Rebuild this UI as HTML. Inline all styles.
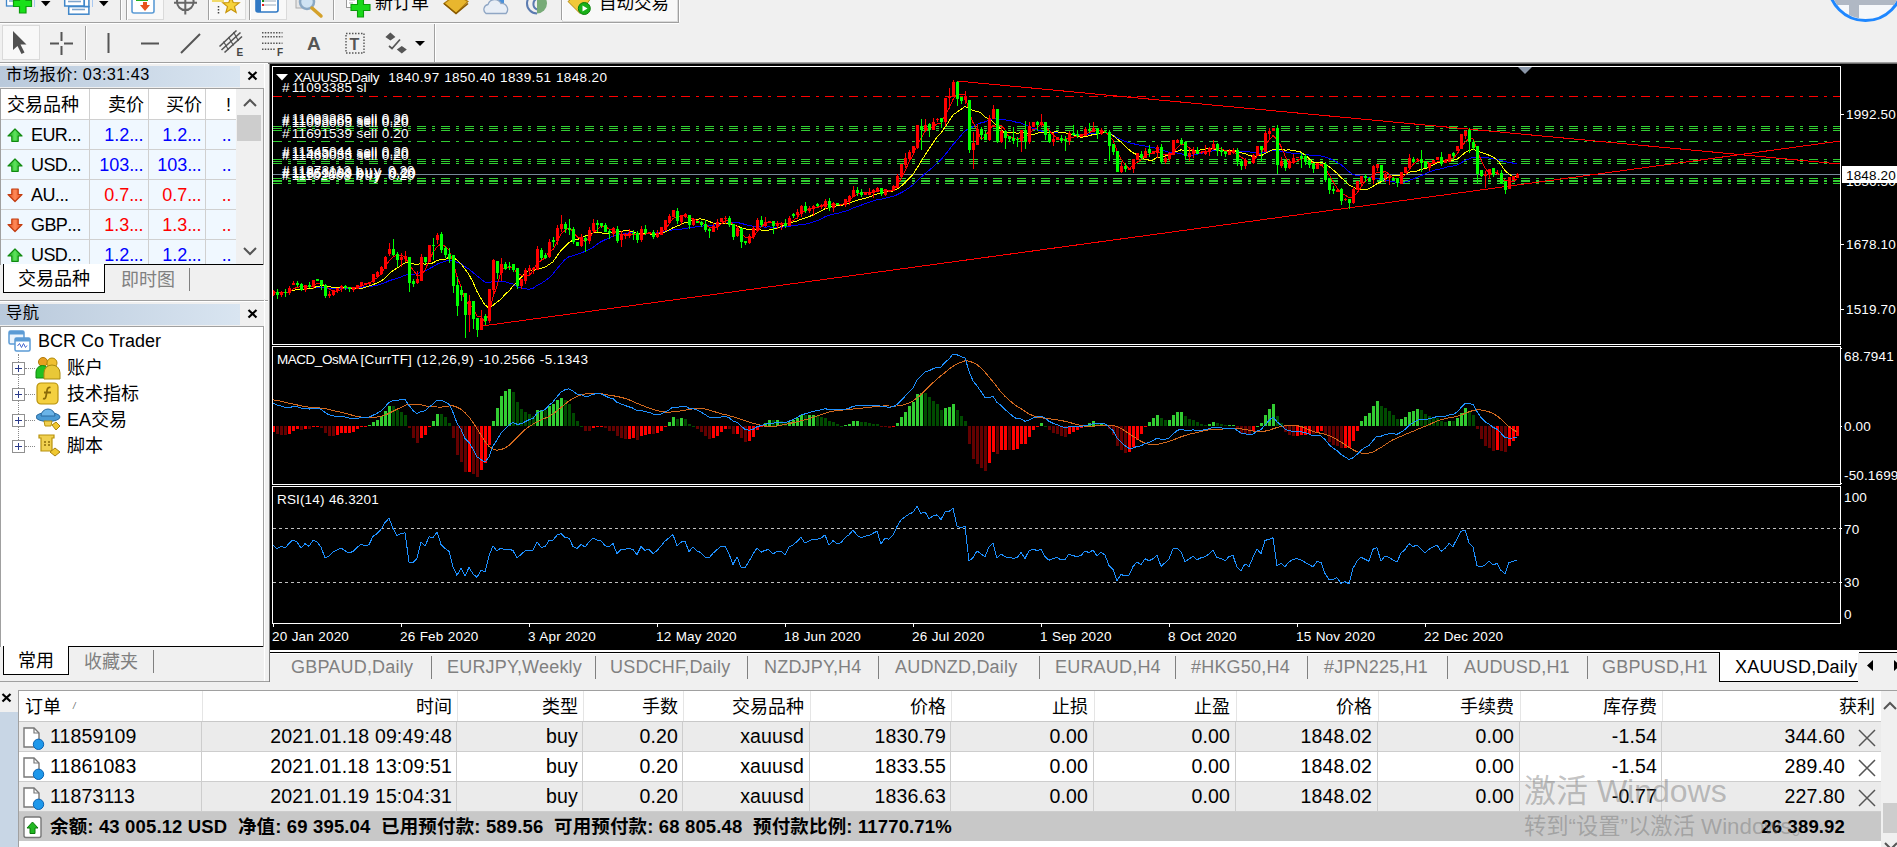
<!DOCTYPE html>
<html lang="zh"><head><meta charset="utf-8"><title>MetaTrader 4</title>
<style>
*{box-sizing:border-box;margin:0;padding:0}
html,body{width:1897px;height:847px;overflow:hidden;background:#f0f0f0;font-family:"Liberation Sans","Noto Sans CJK SC",sans-serif;color:#000}
.a{position:absolute}
.ui{font-size:18px;line-height:30px;white-space:nowrap}
/* toolbars */
#tb1{left:0;top:0;width:678px;height:23px;border-bottom:1px solid #a0a0a0;border-right:1px solid #a0a0a0;overflow:hidden}
#tb1line{left:0;top:22px;width:679px;height:1px;background:#a0a0a0}
#tb1line2{left:0;top:23px;width:679px;height:1px;background:#fff}
#tb2line{left:0;top:62px;width:1897px;height:1px;background:#a0a0a0}
#tb2line2{left:0;top:63px;width:1897px;height:1px;background:#fff}
.vsep{width:1px;background:#a0a0a0;box-shadow:1px 0 0 #fff}
.pressed{background:#f8f8f8;border:1px solid #dadada}
/* left panels */
.phead{left:0;width:240px;height:21px;background:linear-gradient(90deg,#b9c9db,#d9e5f1);font-size:16.3px;letter-spacing:.45px;line-height:17px;padding-left:6px;white-space:nowrap}
.px{font-size:15px;font-weight:bold;line-height:20px}
#mw{left:0;top:88px;width:264px;height:177px;background:#fff;border:1px solid #a0a0a0;border-bottom:0;overflow:hidden}
.mwrow{left:1px;width:235px;height:30px;background:#f0f8ff;border-bottom:1px solid #d0d0d0}
.mwc{top:0;height:30px;font-size:18px;line-height:30px;white-space:nowrap}
.el{letter-spacing:-.4px}
.sy{letter-spacing:-.6px}
.blue{color:#0000ff}.red{color:#ff0000}
.tabline{height:1px;background:#000}
.tabact{background:#fff;border:1px solid #000;border-top:0;font-size:18px;text-align:center;white-space:nowrap}
.tabin{font-size:18px;color:#808080;white-space:nowrap}
#nav{left:0;top:326px;width:264px;height:321px;background:#fff;border:1px solid #a0a0a0;border-bottom:0}
.tree{font-size:18px;line-height:26px;white-space:nowrap}
.exp{width:13px;height:13px;border:1px solid #909090;background:#fff}
.exp:before{content:"";position:absolute;left:2px;top:5px;width:7px;height:1px;background:#2a3a8a}
.exp:after{content:"";position:absolute;left:5px;top:2px;width:1px;height:7px;background:#2a3a8a}
/* chart */
#chartbg{left:270px;top:64px;width:1627px;height:586px;background:#000}
.hs{letter-spacing:2.3px}
.ct{color:#fff;font-size:13.5px;letter-spacing:.15px;word-spacing:.5px;line-height:15px;white-space:nowrap;font-family:"Liberation Sans",sans-serif}
.frame{border:1px solid #fff}
/* chart tabs */
#ctabs{left:270px;top:652px;width:1627px;height:31px}
.ctab{top:653.5px;height:28px;font-size:18px;letter-spacing:.2px;line-height:27px;color:#808080;white-space:nowrap}
.csep{top:656px;width:1px;height:23px;background:#808080}
/* terminal */
#term{left:18px;top:690px;width:1879px;height:157px;background:#fff;border-top:1px solid #a0a0a0;border-left:1px solid #a0a0a0}
.trow{left:19px;width:1862px;height:30px}
.tc{top:0px;height:30px;font-size:19.5px;letter-spacing:.15px;line-height:29px;white-space:nowrap;text-align:right}
.th{top:1px;height:30px;font-size:18px;line-height:30px;white-space:nowrap;text-align:right}
.tsep{top:0;width:1px;height:30px;background:#d8d8d8}

</style></head><body>
<svg width="0" height="0" style="position:absolute"><defs>
<linearGradient id="gu" x1="0" y1="0" x2="1" y2="0"><stop offset="0" stop-color="#18a418"/><stop offset=".5" stop-color="#5ee45e"/><stop offset="1" stop-color="#18a418"/></linearGradient>
<linearGradient id="gd" x1="0" y1="0" x2="1" y2="0"><stop offset="0" stop-color="#e04a14"/><stop offset=".5" stop-color="#ff8a5a"/><stop offset="1" stop-color="#e04a14"/></linearGradient>
</defs></svg>
<!-- ===== toolbar row 1 ===== -->
<div class="a" id="tb1line"></div><div class="a" id="tb1line2"></div>
<div class="a" id="tb2line"></div><div class="a" id="tb2line2"></div>
<div class="a pressed" style="left:127px;top:-8px;width:37px;height:28px"></div>
<div class="a pressed" style="left:209px;top:-8px;width:37px;height:28px"></div>
<div class="a pressed" style="left:250px;top:-8px;width:37px;height:28px"></div>
<div class="a pressed" style="left:562px;top:-8px;width:116px;height:30px"></div>
<div class="a vsep" style="left:120px;top:0;height:20px"></div>
<div class="a vsep" style="left:126px;top:0;height:20px"></div>
<div class="a vsep" style="left:208px;top:0;height:20px"></div>
<div class="a vsep" style="left:249px;top:0;height:20px"></div>
<div class="a vsep" style="left:333px;top:0;height:20px"></div>
<div class="a vsep" style="left:561px;top:0;height:20px"></div>
<div class="a vsep" style="left:678px;top:0;height:22px"></div>
<svg class="a" style="left:0;top:0" width="700" height="22" viewBox="0 0 700 22">
 <!-- new chart -->
 <rect x="6.500" y="-6" width="14" height="12" fill="#fff" stroke="#3f86c9" stroke-width="1.300"/>
 <path d="M9 1h8" stroke="#7fa5cc" stroke-width="1.500"/>
 <path d="M19.500 -7h6.500v7.500h5.500v6h-5.500v6.500h-6.500v-6.500h-6v-6h6z" fill="#19e019" stroke="#0c9c0c" stroke-width="1.200"/>
 <path d="M34.500 0v7M92.500 0v7" stroke="#a8c8f0" stroke-width="1"/>
 <path d="M41 1h9.500l-4.750 5.200z" fill="#000"/>
 <!-- profiles -->
 <rect x="64.700" y="-6" width="19.600" height="12" fill="#fff" stroke="#3f86c9" stroke-width="1.500"/>
 <path d="M68 1.500h13" stroke="#7fa5cc" stroke-width="1.600"/>
 <rect x="68.700" y="6.600" width="20.200" height="7.600" fill="#fff" stroke="#3f86c9" stroke-width="1.500"/>
 <path d="M84.300 0v6.600h4.600v-6.600" fill="#fff" stroke="#3f86c9" stroke-width="1.500"/>
 <path d="M72 9.500h13" stroke="#7fa5cc" stroke-width="1.600"/>
 <path d="M99 1h9.500l-4.750 5.200z" fill="#000"/>
 <!-- market watch -->
 <rect x="132" y="-8" width="22" height="21" rx="2" fill="#fff" stroke="#5b9bd5" stroke-width="1.6"/>
 <path d="M143 2h4v3h3l-5 6-5-6h3z" fill="#e8531a"/>
 <path d="M136 -2h5v-3h3v3h4v3h-12z" fill="#20b020"/>
 <!-- data window crosshair -->
 <circle cx="185.3" cy="1.8" r="8.3" fill="none" stroke="#666" stroke-width="2"/>
 <path d="M185.300 -8v22.500M174 2.800h23" stroke="#666" stroke-width="2"/>
 <!-- navigator star -->
 <path d="M231.0 -3.1L233.2 2.5L239.2 2.8L234.5 6.6L236.1 12.5L231.0 9.2L225.9 12.5L227.5 6.6L222.8 2.8L228.8 2.5z" fill="#f6d23a" stroke="#c8960c" stroke-width="1.2"/>
 <path d="M218.500 6v8" stroke="#444" stroke-width="1.5" stroke-dasharray="1.500 1.500"/>
 <rect x="212" y="-6" width="12" height="8" fill="#f1da6a"/>
 <!-- terminal book -->
 <rect x="256" y="-8" width="22" height="20" rx="2" fill="#fff" stroke="#2f78c4" stroke-width="1.6"/>
 <rect x="256" y="-8" width="5" height="20" fill="#2f78c4"/>
 <path d="M264 1h12M264 5h12" stroke="#9ab" stroke-width="1"/>
 <rect x="262" y="0" width="2" height="2" fill="#1a8a1a"/><rect x="262" y="4" width="2" height="2" fill="#e02020"/>
 <!-- tester magnifier -->
 <rect x="296" y="-6" width="12" height="14" fill="#e6e6e6" stroke="#aaa"/>
 <circle cx="307" cy="2" r="7" fill="#cfe3f3" stroke="#8aa8c4" stroke-width="2.5"/>
 <path d="M312 8l9 8" stroke="#d4a12a" stroke-width="3.5" stroke-linecap="round"/>
 <!-- new order -->
 <rect x="346.500" y="-6" width="13" height="13.500" fill="#fff" stroke="#999"/>
 <path d="M349 0h6M349 3h4" stroke="#aaa" stroke-width="1"/>
 <path d="M357.500 -2h6v6.500h6.500v6h-6.500v6.500h-6v-6.500h-6.500v-6h6.500z" fill="#19d819" stroke="#0c9c0c" stroke-width="1.100"/>
 <g transform="translate(0,1.500)">
 <!-- gold book -->
 <path d="M444 2l12-9 12 7-12 12z" fill="#e8b62e" stroke="#b07d0c" stroke-width="1.200"/>
 <path d="M444 2l12 10 12-10" fill="none" stroke="#8a5a00" stroke-width="1.600"/>
 <!-- cloud -->
 <rect x="492" y="-8" width="12" height="10" fill="#4a90d9"/>
 <path d="M486 12a5 5 0 0 1 2-9a7 7 0 0 1 13-1a6 6 0 0 1 5 10z" fill="#e8eef6" stroke="#8fa6c4" stroke-width="1.300"/>
 <!-- signal -->
 <path d="M537 -8a10 10 0 0 0 0 20" fill="none" stroke="#5b7bb0" stroke-width="2"/>
 <path d="M537 -3a6 6 0 0 0 0 11" fill="none" stroke="#5b7bb0" stroke-width="2"/>
 <path d="M537 -8a10 10 0 0 1 0 20z" fill="#5a9a5a" opacity=".8"/>
 <!-- autotrading -->
 <path d="M568 0l10-8 12 6-10 14z" fill="#f0c83a" stroke="#b58a10" stroke-width="1"/>
 <circle cx="584.300" cy="7" r="6" fill="#18b018" stroke="#0a800a"/>
 <path d="M582.500 4v6l5-3z" fill="#fff"/>
 </g>
</svg>
<div class="a ui" style="left:375px;top:-12px;">新订单</div>
<div class="a ui" style="left:599px;top:-12px;font-size:17.500px">自动交易</div>
<!-- avatar circle top right -->
<div class="a" style="left:1827px;top:-54.800px;width:76.800px;height:76.800px;border-radius:50%;border:3.300px solid #1e87ff;background:#f5f7fa;overflow:hidden">
<div class="a" style="left:0;top:50px;width:80px;height:7px;background:#b0b8c4"></div>
<div class="a" style="left:18.500px;top:50px;width:10px;height:30px;background:#b0b8c4"></div>
</div>
<!-- ===== toolbar row 2 ===== -->
<div class="a pressed" style="left:2px;top:25px;width:38px;height:35px"></div>
<div class="a vsep" style="left:85px;top:26px;height:34px"></div>
<div class="a vsep" style="left:434px;top:24px;height:38px"></div>
<svg class="a" style="left:0;top:24px" width="440" height="38" viewBox="0 24 440 38">
 <path d="M13 31v19l4.500-4 4 8 3-1.500-4-8h6z" fill="#505050"/>
 <path d="M50 43.500h9M64 43.500h9M61.500 32v9M61.500 46v9" stroke="#555" stroke-width="2"/>
 <path d="M108.500 33v20" stroke="#555" stroke-width="2"/>
 <path d="M141 43.500h18" stroke="#555" stroke-width="2"/>
 <path d="M181 53l19-19" stroke="#555" stroke-width="2"/>
 <!-- channel E -->
 <path d="M219.500 46.500l17-16M221.500 50l19-17.500M224.500 52.500l17.500-16" stroke="#555" stroke-width="1.600"/>
 <path d="M223.500 41.500l5 8.500M228.500 37l5 8.500M233.500 32l5 9" stroke="#555" stroke-width="1.200"/>
 <!-- fibo F -->
 <path d="M262 32.700h20.500M262 36.700h20.500M262 43.200h20.500M262 49.300h14" stroke="#555" stroke-width="1.500" stroke-dasharray="1.500 1.300"/>
 <!-- T box -->
 <rect x="346" y="33.500" width="18" height="19.500" fill="none" stroke="#555" stroke-width="1.400" stroke-dasharray="1.500 1.500"/>
 <!-- arrows -->
 <path d="M385.400 37l5-4.500 5 4.500-5 3.500zM396.800 49.500l5-3.500 5 3.500-5 4z" fill="#555"/>
 <path d="M389 46l3 2.500 8-9" stroke="#555" stroke-width="1.700" fill="none"/>
 <path d="M415 41h10l-5 5z" fill="#000"/>
</svg>
<div class="a" style="left:236.500px;top:47.500px;font-size:10px;font-weight:bold;color:#444;line-height:10px">E</div>
<div class="a" style="left:277px;top:47.500px;font-size:10px;font-weight:bold;color:#444;line-height:10px">F</div>
<div class="a" style="left:307px;top:32.500px;font-size:19px;font-weight:bold;color:#555;line-height:22px">A</div>
<div class="a" style="left:349.500px;top:34.500px;font-size:16px;font-weight:bold;color:#555;line-height:20px">T</div>
<!-- ===== Market Watch ===== -->
<div class="a phead" style="top:66px">市场报价: 03:31:43</div>
<svg class="a" style="left:247px;top:71px" width="12" height="10" viewBox="0 0 12 10"><path d="M1.500 1l8 7.500M9.500 1l-8 7.500" stroke="#000" stroke-width="2.200"/></svg>
<div class="a" id="mw">
 <div class="a" style="left:0;top:0;width:235px;height:31px;background:#fff;border-bottom:1px solid #d0d0d0"></div>
 <div class="a mwc" style="top:1px;left:6px;">交易品种</div>
 <div class="a mwc" style="top:1px;left:107px;">卖价</div>
 <div class="a mwc" style="top:1px;left:165px;">买价</div>
 <div class="a mwc" style="top:1px;left:225px;">!</div>
 <div class="a mwrow" style="left:0;top:31px"><svg class="a" style="left:5.300px;top:7px" width="18" height="18" viewBox="0 0 18 18"><path d="M9 2l7 7h-3.800v5.300h-6.400v-5.300h-3.800z" fill="url(#gu)" stroke="#108a10" stroke-width="1.200" stroke-linejoin="round"/></svg><div class="a mwc sy" style="left:30px">EUR<span class="el">...</span></div><div class="a mwc blue" style="left:89px;width:53px;text-align:right">1.2<span class="el">...</span></div><div class="a mwc blue" style="left:148px;width:52px;text-align:right">1.2<span class="el">...</span></div><div class="a mwc blue" style="left:206px;width:24px;text-align:right"><span class="el">..</span></div></div>
<div class="a mwrow" style="left:0;top:61px"><svg class="a" style="left:5.300px;top:7px" width="18" height="18" viewBox="0 0 18 18"><path d="M9 2l7 7h-3.800v5.300h-6.400v-5.300h-3.800z" fill="url(#gu)" stroke="#108a10" stroke-width="1.200" stroke-linejoin="round"/></svg><div class="a mwc sy" style="left:30px">USD<span class="el">...</span></div><div class="a mwc blue" style="left:89px;width:53px;text-align:right">103<span class="el">...</span></div><div class="a mwc blue" style="left:148px;width:52px;text-align:right">103<span class="el">...</span></div><div class="a mwc blue" style="left:206px;width:24px;text-align:right"><span class="el">..</span></div></div>
<div class="a mwrow" style="left:0;top:91px"><svg class="a" style="left:5.300px;top:6px" width="18" height="18" viewBox="0 0 18 18"><path d="M9 15.500l7-7h-3.800v-5.500h-6.400v5.500h-3.800z" fill="url(#gd)" stroke="#c23c10" stroke-width="1.200" stroke-linejoin="round"/></svg><div class="a mwc sy" style="left:30px">AU<span class="el">...</span></div><div class="a mwc red" style="left:89px;width:53px;text-align:right">0.7<span class="el">...</span></div><div class="a mwc red" style="left:148px;width:52px;text-align:right">0.7<span class="el">...</span></div><div class="a mwc red" style="left:206px;width:24px;text-align:right"><span class="el">..</span></div></div>
<div class="a mwrow" style="left:0;top:121px"><svg class="a" style="left:5.300px;top:6px" width="18" height="18" viewBox="0 0 18 18"><path d="M9 15.500l7-7h-3.800v-5.500h-6.400v5.500h-3.800z" fill="url(#gd)" stroke="#c23c10" stroke-width="1.200" stroke-linejoin="round"/></svg><div class="a mwc sy" style="left:30px">GBP<span class="el">...</span></div><div class="a mwc red" style="left:89px;width:53px;text-align:right">1.3<span class="el">...</span></div><div class="a mwc red" style="left:148px;width:52px;text-align:right">1.3<span class="el">...</span></div><div class="a mwc red" style="left:206px;width:24px;text-align:right"><span class="el">..</span></div></div>
<div class="a mwrow" style="left:0;top:151px"><svg class="a" style="left:5.300px;top:7px" width="18" height="18" viewBox="0 0 18 18"><path d="M9 2l7 7h-3.800v5.300h-6.400v-5.300h-3.800z" fill="url(#gu)" stroke="#108a10" stroke-width="1.200" stroke-linejoin="round"/></svg><div class="a mwc sy" style="left:30px">USD<span class="el">...</span></div><div class="a mwc blue" style="left:89px;width:53px;text-align:right">1.2<span class="el">...</span></div><div class="a mwc blue" style="left:148px;width:52px;text-align:right">1.2<span class="el">...</span></div><div class="a mwc blue" style="left:206px;width:24px;text-align:right"><span class="el">..</span></div></div>

 <div class="a" style="left:88px;top:0;width:1px;height:180px;background:#d0d0d0"></div>
 <div class="a" style="left:147px;top:0;width:1px;height:180px;background:#d0d0d0"></div>
 <div class="a" style="left:204px;top:0;width:1px;height:180px;background:#d0d0d0"></div>
 <!-- scrollbar -->
 <div class="a" style="left:235px;top:0;width:28px;height:180px;background:#f0f0f0"></div>
 <div class="a" style="left:236px;top:26px;width:24px;height:26px;background:#cdcdcd"></div>
 <svg class="a" style="left:241px;top:9px" width="16" height="10" viewBox="0 0 16 10"><path d="M2 8l6-6 6 6" fill="none" stroke="#555" stroke-width="2"/></svg>
 <svg class="a" style="left:241px;top:157px" width="16" height="10" viewBox="0 0 16 10"><path d="M2 2l6 6 6-6" fill="none" stroke="#555" stroke-width="2"/></svg>
</div>
<div class="a tabline" style="left:104px;top:264px;width:159px"></div>
<div class="a tabact" style="left:3px;top:264px;width:102px;height:29px;line-height:31px">交易品种</div>
<div class="a tabin" style="left:121px;top:267px;line-height:27px">即时图</div>
<div class="a" style="left:189px;top:268px;width:1px;height:23px;background:#808080"></div>
<div class="a" style="left:0;top:300px;width:268px;height:1px;background:#a0a0a0"></div>
<div class="a" style="left:0;top:301px;width:268px;height:1px;background:#fff"></div>
<div class="a" style="left:264px;top:64px;width:1px;height:235px;background:#fff"></div>
<!-- ===== Navigator ===== -->
<div class="a phead" style="top:304px">导航</div>
<svg class="a" style="left:247px;top:309px" width="12" height="10" viewBox="0 0 12 10"><path d="M1.500 1l8 7.500M9.500 1l-8 7.500" stroke="#000" stroke-width="2.200"/></svg>
<div class="a" id="nav">
 <svg class="a" style="left:7px;top:3px" width="24" height="24" viewBox="0 0 24 24">
  <rect x="1" y="1" width="15" height="13" rx="1.500" fill="#eaf3fc" stroke="#5b9bd5" stroke-width="1.500"/><rect x="1" y="1" width="15" height="3.500" fill="#5b9bd5"/>
  <rect x="7" y="8" width="15" height="13" rx="1.500" fill="#fff" stroke="#5b9bd5" stroke-width="1.500"/><rect x="7" y="8" width="15" height="3.500" fill="#5b9bd5"/>
  <path d="M9.500 16l2-2.500 2 4 2-4 2 4 1.500-2" fill="none" stroke="#4a6ad0" stroke-width="1"/>
 </svg>
 <div class="a tree" style="left:37px;top:1px">BCR Co Trader</div>
 <div class="a" style="left:17px;top:27px;width:0;height:86px;border-left:1px dotted #888"></div>
 <div class="a exp" style="left:11px;top:35px"></div><div class="a" style="left:24px;top:41px;width:10px;height:0;border-top:1px dotted #888"></div><svg class="a" style="left:34px;top:29px" width="26" height="24" viewBox="0 0 26 24"><circle cx="8" cy="6" r="4.500" fill="#e8a020" stroke="#b07808"/><path d="M1 22v-6a6 6 0 0 1 13 0v6z" fill="#22c022" stroke="#0d8a0d"/><circle cx="17" cy="7" r="5" fill="#f0c030" stroke="#b08a08"/><path d="M9 23v-6a8 8 0 0 1 16 0v6z" fill="#e8c838" stroke="#a88a10"/></svg><div class="a tree" style="left:66px;top:28px">账户</div>
<div class="a exp" style="left:11px;top:61px"></div><div class="a" style="left:24px;top:67px;width:10px;height:0;border-top:1px dotted #888"></div><svg class="a" style="left:35px;top:55px" width="24" height="24" viewBox="0 0 24 24"><rect x="1" y="1" width="21" height="21" rx="4" fill="#f4d040" stroke="#b8920c" stroke-width="1.200"/><path d="M14.500 5.500c-3 -1 -3.500 2 -4 6s-1 6 -3.500 5M8 10.500h7" fill="none" stroke="#8a6a08" stroke-width="1.800"/></svg><div class="a tree" style="left:66px;top:54px">技术指标</div>
<div class="a exp" style="left:11px;top:87px"></div><div class="a" style="left:24px;top:93px;width:10px;height:0;border-top:1px dotted #888"></div><svg class="a" style="left:35px;top:81px" width="26" height="24" viewBox="0 0 26 24"><ellipse cx="12" cy="9" rx="12" ry="4.500" fill="#4a9ad4" stroke="#2a6aa0"/><path d="M5 8a7 7 0 0 1 14 0z" fill="#6ab4e8" stroke="#2a6aa0"/><path d="M8 13h8l-1 5h-6z" fill="#f0d050" stroke="#b8920c"/><path d="M16 17l4-3 4 4-4 4z" fill="#f0c830" stroke="#a8820c"/></svg><div class="a tree" style="left:66px;top:80px">EA交易</div>
<div class="a exp" style="left:11px;top:113px"></div><div class="a" style="left:24px;top:119px;width:10px;height:0;border-top:1px dotted #888"></div><svg class="a" style="left:35px;top:107px" width="26" height="24" viewBox="0 0 26 24"><path d="M3 1h15v3h-2v13h-11v-13h-2z" fill="#f0d050" stroke="#b8920c" stroke-width="1.200"/><path d="M8 8h2M12 8h2M8 11h2M12 11h2" stroke="#8a6a08" stroke-width="1.500"/><path d="M14 18l5-4 5 4-5 4z" fill="#f0c830" stroke="#a8820c"/></svg><div class="a tree" style="left:66px;top:106px">脚本</div>

</div>
<div class="a tabline" style="left:68px;top:646px;width:195px"></div>
<div class="a tabact" style="left:3px;top:646px;width:66px;height:29px;line-height:31px">常用</div>
<div class="a tabin" style="left:84px;top:649px;line-height:27px">收藏夹</div>
<div class="a" style="left:153px;top:650px;width:1px;height:23px;background:#808080"></div>
<div class="a" style="left:0;top:681px;width:270px;height:1px;background:#a0a0a0"></div>
<div class="a" style="left:269px;top:64px;width:1px;height:618px;background:#808080"></div>
<div class="a" style="left:264px;top:300px;width:1px;height:381px;background:#fff"></div>
<!-- ===== Chart ===== -->
<div class="a" style="left:268px;top:63px;width:1629px;height:1px;background:#696969"></div>
<div class="a" id="chartbg"></div>
<div class="a" style="left:270px;top:650px;width:1627px;height:2px;background:#fff"></div>
<svg class="a" style="left:270px;top:64px" width="1627" height="587" viewBox="270 64 1627 587" shape-rendering="crispEdges">
<line x1="273" y1="96.5" x2="1840" y2="96.5" stroke="#ff0000" stroke-width="1" stroke-dasharray="9 6 3 6"/>
<line x1="273" y1="126.5" x2="1840" y2="126.5" stroke="#32cd32" stroke-width="1" stroke-dasharray="9 6 3 6"/>
<line x1="273" y1="128.5" x2="1840" y2="128.5" stroke="#32cd32" stroke-width="1" stroke-dasharray="9 6 3 6"/>
<line x1="273" y1="130.5" x2="1840" y2="130.5" stroke="#32cd32" stroke-width="1" stroke-dasharray="9 6 3 6"/>
<line x1="273" y1="141.5" x2="1840" y2="141.5" stroke="#32cd32" stroke-width="1" stroke-dasharray="9 6 3 6"/>
<line x1="273" y1="159.5" x2="1840" y2="159.5" stroke="#32cd32" stroke-width="1" stroke-dasharray="9 6 3 6"/>
<line x1="273" y1="161.5" x2="1840" y2="161.5" stroke="#32cd32" stroke-width="1" stroke-dasharray="9 6 3 6"/>
<line x1="273" y1="163.5" x2="1840" y2="163.5" stroke="#32cd32" stroke-width="1" stroke-dasharray="9 6 3 6"/>
<line x1="273" y1="178.5" x2="1840" y2="178.5" stroke="#32cd32" stroke-width="1" stroke-dasharray="9 6 3 6"/>
<line x1="273" y1="180.5" x2="1840" y2="180.5" stroke="#32cd32" stroke-width="1" stroke-dasharray="9 6 3 6"/>
<line x1="273" y1="181.5" x2="1840" y2="181.5" stroke="#32cd32" stroke-width="1" stroke-dasharray="9 6 3 6"/>
<line x1="273" y1="183.5" x2="1840" y2="183.5" stroke="#32cd32" stroke-width="1" stroke-dasharray="9 6 3 6"/>
<line x1="273" y1="174.5" x2="1840" y2="174.5" stroke="#778899" stroke-width="1" stroke-dasharray=""/>
<g>
<line x1="482" y1="326" x2="1840" y2="141" stroke="#ff0000" stroke-width="1"/>
<line x1="957" y1="81" x2="1840" y2="164" stroke="#ff0000" stroke-width="1"/>
</g>
<polyline points="273.0,291.0 277.0,293.0 281.0,292.6 285.0,292.9 289.0,291.9 293.0,290.4 297.0,289.6 301.0,289.7 305.0,289.1 309.0,288.9 313.0,288.1 317.0,287.6 321.0,287.4 325.0,288.0 329.0,288.4 333.0,288.5 337.0,288.4 341.0,288.3 345.0,288.2 349.0,288.3 353.0,288.2 357.0,287.7 361.0,287.2 365.0,286.7 369.0,286.4 373.0,286.0 377.0,285.3 381.0,284.1 385.0,282.7 389.0,280.8 393.0,279.5 397.0,278.5 401.0,277.1 405.0,275.1 409.0,274.5 413.0,274.2 417.0,273.8 421.0,272.4 425.0,271.1 429.0,268.8 433.0,266.7 437.0,264.2 441.0,262.6 445.0,261.2 449.0,260.0 453.0,260.6 457.0,262.3 461.0,263.7 465.0,266.6 469.0,269.2 473.0,272.4 477.0,275.9 481.0,279.0 485.0,282.2 489.0,282.6 493.0,281.4 497.0,281.1 501.0,281.4 505.0,281.8 509.0,282.9 513.0,284.1 517.0,286.6 521.0,288.1 525.0,288.8 529.0,289.2 533.0,288.3 537.0,285.5 541.0,283.6 545.0,280.8 549.0,277.8 553.0,273.9 557.0,268.8 561.0,264.1 565.0,259.5 569.0,256.6 573.0,255.7 577.0,254.3 581.0,252.9 585.0,251.5 589.0,249.7 593.0,247.4 597.0,244.3 601.0,241.7 605.0,239.8 609.0,238.1 613.0,236.1 617.0,235.7 621.0,234.5 625.0,233.3 629.0,232.9 633.0,232.5 637.0,233.1 641.0,233.4 645.0,233.6 649.0,233.7 653.0,233.4 657.0,232.8 661.0,232.3 665.0,231.3 669.0,230.5 673.0,229.9 677.0,229.7 681.0,229.2 685.0,228.3 689.0,227.9 693.0,227.4 697.0,226.5 701.0,226.1 705.0,225.9 709.0,225.8 713.0,225.4 717.0,224.5 721.0,223.9 725.0,223.2 729.0,222.8 733.0,222.8 737.0,222.5 741.0,223.3 745.0,224.4 749.0,225.4 753.0,226.3 757.0,226.2 761.0,226.7 765.0,227.1 769.0,226.9 773.0,227.2 777.0,227.2 781.0,227.1 785.0,226.9 789.0,226.3 793.0,225.7 797.0,225.2 801.0,224.6 805.0,224.2 809.0,223.4 813.0,221.9 817.0,220.8 821.0,218.9 825.0,216.8 829.0,215.4 833.0,214.2 837.0,213.4 841.0,212.4 845.0,211.2 849.0,209.9 853.0,208.1 857.0,206.7 861.0,205.2 865.0,203.6 869.0,202.3 873.0,201.0 877.0,199.8 881.0,199.3 885.0,198.2 889.0,197.3 893.0,196.3 897.0,194.8 901.0,192.8 905.0,190.6 909.0,187.8 913.0,185.0 917.0,180.9 921.0,177.2 925.0,173.6 929.0,170.3 933.0,166.9 937.0,163.2 941.0,159.6 945.0,154.8 949.0,150.0 953.0,144.6 957.0,140.1 961.0,135.5 965.0,130.8 969.0,128.8 973.0,126.7 977.0,124.3 981.0,122.8 985.0,121.9 989.0,120.3 993.0,118.4 997.0,119.2 1001.0,119.3 1005.0,119.9 1009.0,120.4 1013.0,121.3 1017.0,122.4 1021.0,122.8 1025.0,125.0 1029.0,126.5 1033.0,128.5 1037.0,129.7 1041.0,130.8 1045.0,132.7 1049.0,132.3 1053.0,132.1 1057.0,132.5 1061.0,132.9 1065.0,132.9 1069.0,133.6 1073.0,134.9 1077.0,134.7 1081.0,134.9 1085.0,134.4 1089.0,134.0 1093.0,133.3 1097.0,133.1 1101.0,133.1 1105.0,132.6 1109.0,133.6 1113.0,135.2 1117.0,137.5 1121.0,139.7 1125.0,141.4 1129.0,142.7 1133.0,143.7 1137.0,144.5 1141.0,145.4 1145.0,145.9 1149.0,146.9 1153.0,147.7 1157.0,148.3 1161.0,149.6 1165.0,151.0 1169.0,152.2 1173.0,152.8 1177.0,153.0 1181.0,153.7 1185.0,154.8 1189.0,155.2 1193.0,155.1 1197.0,154.2 1201.0,153.5 1205.0,152.6 1209.0,151.6 1213.0,150.8 1217.0,150.7 1221.0,150.4 1225.0,150.6 1229.0,150.4 1233.0,150.3 1237.0,151.1 1241.0,151.3 1245.0,151.4 1249.0,151.9 1253.0,152.7 1257.0,153.0 1261.0,153.3 1265.0,152.2 1269.0,151.1 1273.0,150.0 1277.0,150.6 1281.0,151.1 1285.0,151.9 1289.0,152.6 1293.0,153.3 1297.0,153.6 1301.0,153.9 1305.0,154.3 1309.0,155.0 1313.0,155.9 1317.0,156.0 1321.0,155.9 1325.0,156.9 1329.0,158.3 1333.0,160.1 1337.0,162.2 1341.0,164.7 1345.0,168.1 1349.0,171.7 1353.0,174.7 1357.0,175.4 1361.0,176.2 1365.0,176.7 1369.0,177.7 1373.0,178.1 1377.0,178.5 1381.0,179.6 1385.0,180.2 1389.0,180.8 1393.0,181.4 1397.0,182.4 1401.0,182.8 1405.0,182.1 1409.0,180.5 1413.0,179.0 1417.0,177.4 1421.0,175.6 1425.0,174.0 1429.0,172.0 1433.0,170.5 1437.0,169.4 1441.0,168.8 1445.0,167.8 1449.0,166.5 1453.0,166.0 1457.0,165.1 1461.0,162.8 1465.0,160.6 1469.0,158.9 1473.0,157.3 1477.0,156.9 1481.0,157.1 1485.0,157.4 1489.0,158.0 1493.0,158.7 1497.0,159.4 1501.0,160.4 1505.0,161.6 1509.0,162.3 1513.0,163.1 1517.0,163.9" fill="none" stroke="#0000ff" stroke-width="1" />
<polyline points="273.0,291.0 277.0,293.0 281.0,292.6 285.0,292.9 289.0,291.9 293.0,290.4 297.0,289.6 301.0,289.7 305.0,289.1 309.0,288.9 313.0,287.9 317.0,286.5 321.0,285.8 325.0,286.0 329.0,286.6 333.0,287.3 337.0,287.6 341.0,287.1 345.0,287.4 349.0,287.7 353.0,288.5 357.0,288.9 361.0,288.6 365.0,287.3 369.0,286.1 373.0,284.6 377.0,283.0 381.0,281.1 385.0,278.0 389.0,273.9 393.0,270.6 397.0,268.1 401.0,265.5 405.0,262.8 409.0,262.9 413.0,263.8 417.0,264.6 421.0,263.6 425.0,264.1 429.0,263.8 433.0,262.9 437.0,260.3 441.0,259.6 445.0,259.5 449.0,257.1 453.0,257.3 457.0,260.0 461.0,263.8 465.0,269.1 469.0,274.7 473.0,282.0 477.0,291.6 481.0,298.4 485.0,305.0 489.0,308.0 493.0,305.4 497.0,302.1 501.0,299.1 505.0,294.4 509.0,291.0 513.0,286.1 517.0,281.7 521.0,277.7 525.0,272.6 529.0,270.5 533.0,271.2 537.0,268.8 541.0,268.2 545.0,267.1 549.0,264.6 553.0,261.8 557.0,256.0 561.0,250.5 565.0,246.5 569.0,242.7 573.0,240.1 577.0,239.8 581.0,237.7 585.0,236.0 589.0,234.9 593.0,233.0 597.0,232.7 601.0,232.9 605.0,233.2 609.0,233.5 613.0,232.1 617.0,231.7 621.0,231.3 625.0,230.7 629.0,230.9 633.0,232.0 637.0,233.5 641.0,233.8 645.0,234.0 649.0,233.8 653.0,234.7 657.0,233.9 661.0,233.3 665.0,231.9 669.0,230.2 673.0,227.8 677.0,225.9 681.0,224.6 685.0,222.7 689.0,221.9 693.0,220.1 697.0,219.1 701.0,218.9 705.0,219.9 709.0,221.4 713.0,223.0 717.0,223.1 721.0,223.3 725.0,223.7 729.0,223.6 733.0,225.4 737.0,225.9 741.0,227.6 745.0,228.9 749.0,229.4 753.0,229.6 757.0,229.4 761.0,230.0 765.0,230.5 769.0,230.1 773.0,229.1 777.0,228.6 781.0,226.6 785.0,225.0 789.0,223.1 793.0,221.9 797.0,221.1 801.0,219.2 805.0,218.0 809.0,216.7 813.0,214.7 817.0,213.0 821.0,211.2 825.0,208.7 829.0,207.7 833.0,206.4 837.0,205.8 841.0,205.6 845.0,204.4 849.0,203.2 853.0,201.6 857.0,200.3 861.0,199.3 865.0,198.5 869.0,196.9 873.0,195.6 877.0,193.9 881.0,192.9 885.0,192.0 889.0,191.4 893.0,191.0 897.0,189.2 901.0,186.2 905.0,182.7 909.0,178.6 913.0,174.3 917.0,168.0 921.0,161.6 925.0,155.1 929.0,149.2 933.0,142.8 937.0,137.1 941.0,132.9 945.0,126.9 949.0,121.3 953.0,114.8 957.0,112.2 961.0,109.3 965.0,106.5 969.0,108.5 973.0,110.5 977.0,111.5 981.0,112.7 985.0,117.0 989.0,119.2 993.0,121.9 997.0,126.2 1001.0,129.2 1005.0,133.4 1009.0,132.3 1013.0,132.1 1017.0,133.2 1021.0,132.8 1025.0,133.0 1029.0,133.7 1033.0,135.0 1037.0,133.3 1041.0,132.4 1045.0,132.1 1049.0,132.3 1053.0,132.1 1057.0,131.8 1061.0,132.9 1065.0,132.8 1069.0,133.5 1073.0,134.9 1077.0,136.0 1081.0,137.3 1085.0,136.8 1089.0,135.7 1093.0,134.6 1097.0,134.3 1101.0,133.2 1105.0,132.4 1109.0,133.7 1113.0,135.4 1117.0,139.0 1121.0,142.0 1125.0,146.0 1129.0,149.7 1133.0,152.8 1137.0,154.8 1141.0,157.6 1145.0,159.3 1149.0,160.1 1153.0,160.0 1157.0,157.5 1161.0,157.1 1165.0,156.1 1169.0,154.6 1173.0,152.7 1177.0,151.3 1181.0,149.8 1185.0,150.4 1189.0,150.3 1193.0,150.2 1197.0,150.8 1201.0,149.8 1205.0,149.1 1209.0,148.5 1213.0,148.9 1217.0,150.1 1221.0,150.9 1225.0,150.8 1229.0,150.5 1233.0,150.5 1237.0,151.3 1241.0,152.8 1245.0,153.7 1249.0,155.3 1253.0,156.4 1257.0,155.9 1261.0,155.8 1265.0,153.6 1269.0,151.6 1273.0,149.5 1277.0,149.8 1281.0,149.4 1285.0,150.1 1289.0,149.9 1293.0,150.2 1297.0,151.3 1301.0,152.1 1305.0,155.0 1309.0,158.4 1313.0,162.4 1317.0,162.2 1321.0,162.4 1325.0,163.7 1329.0,166.6 1333.0,169.9 1337.0,173.2 1341.0,177.4 1345.0,181.1 1349.0,184.9 1353.0,187.0 1357.0,188.7 1361.0,189.9 1365.0,189.8 1369.0,188.8 1373.0,186.3 1377.0,183.7 1381.0,181.8 1385.0,179.3 1389.0,176.7 1393.0,175.8 1397.0,176.0 1401.0,175.6 1405.0,174.4 1409.0,172.1 1413.0,171.7 1417.0,171.2 1421.0,169.3 1425.0,168.6 1429.0,167.2 1433.0,165.2 1437.0,162.7 1441.0,161.9 1445.0,161.2 1449.0,160.8 1453.0,160.3 1457.0,159.1 1461.0,156.2 1465.0,152.5 1469.0,150.6 1473.0,149.3 1477.0,151.0 1481.0,152.3 1485.0,153.6 1489.0,155.2 1493.0,157.0 1497.0,159.7 1501.0,164.7 1505.0,170.6 1509.0,174.0 1513.0,176.8 1517.0,176.7" fill="none" stroke="#ffff00" stroke-width="1" />
<polyline points="273.0,291.0 277.0,293.0 281.0,292.6 285.0,292.9 289.0,292.1 293.0,289.1 297.0,287.4 301.0,286.5 305.0,285.8 309.0,286.8 313.0,285.6 317.0,283.4 321.0,283.4 325.0,285.6 329.0,289.0 333.0,291.2 337.0,291.7 341.0,289.2 345.0,287.8 349.0,287.8 353.0,287.9 357.0,287.7 361.0,286.3 365.0,284.6 369.0,283.1 373.0,280.5 377.0,277.8 381.0,273.8 385.0,267.4 389.0,260.9 393.0,256.8 397.0,255.1 401.0,255.2 405.0,257.0 409.0,263.9 413.0,269.9 417.0,275.4 421.0,275.6 425.0,270.4 429.0,260.8 433.0,252.5 437.0,247.0 441.0,243.8 445.0,246.3 449.0,249.6 453.0,262.4 457.0,276.5 461.0,286.5 465.0,300.5 469.0,304.2 473.0,307.5 477.0,316.2 481.0,317.0 485.0,322.0 489.0,314.5 493.0,297.1 497.0,285.9 501.0,271.6 505.0,266.6 509.0,268.1 513.0,267.3 517.0,272.8 521.0,275.2 525.0,276.0 529.0,275.6 533.0,271.1 537.0,263.6 541.0,260.7 545.0,258.1 549.0,251.6 553.0,249.7 557.0,242.2 561.0,233.8 565.0,230.6 569.0,227.8 573.0,231.3 577.0,236.8 581.0,238.8 585.0,241.4 589.0,238.5 593.0,232.8 597.0,229.8 601.0,226.0 605.0,226.4 609.0,229.1 613.0,229.8 617.0,233.6 621.0,234.1 625.0,234.2 629.0,235.5 633.0,233.8 637.0,235.2 641.0,234.0 645.0,234.1 649.0,233.6 653.0,232.8 657.0,233.8 661.0,232.3 665.0,229.4 669.0,224.1 673.0,218.4 677.0,216.8 681.0,215.6 685.0,215.3 689.0,219.0 693.0,218.5 697.0,220.3 701.0,222.9 705.0,224.2 709.0,227.2 713.0,228.0 717.0,227.2 721.0,224.2 725.0,220.9 729.0,220.6 733.0,224.2 737.0,226.8 741.0,232.8 745.0,237.3 749.0,237.3 753.0,237.2 757.0,231.7 761.0,227.2 765.0,223.6 769.0,222.0 773.0,223.5 777.0,223.1 781.0,223.2 785.0,224.4 789.0,222.4 793.0,220.5 797.0,217.8 801.0,212.7 805.0,210.8 809.0,209.0 813.0,207.5 817.0,207.5 821.0,206.1 825.0,204.3 829.0,204.8 833.0,204.2 837.0,204.3 841.0,205.1 845.0,202.8 849.0,201.0 853.0,197.1 857.0,194.4 861.0,193.3 865.0,192.6 869.0,193.2 873.0,192.4 877.0,190.6 881.0,191.0 885.0,190.4 889.0,190.4 893.0,189.9 897.0,185.2 901.0,178.8 905.0,170.9 909.0,162.2 913.0,155.0 917.0,145.2 921.0,138.2 925.0,131.6 929.0,127.5 933.0,126.8 937.0,124.0 941.0,123.3 945.0,115.2 949.0,108.6 953.0,99.4 957.0,93.5 961.0,94.4 965.0,94.5 969.0,111.5 973.0,122.5 977.0,129.4 981.0,139.1 985.0,136.6 989.0,130.3 993.0,125.4 997.0,127.1 1001.0,124.9 1005.0,129.9 1009.0,137.5 1013.0,137.3 1017.0,139.6 1021.0,137.6 1025.0,138.2 1029.0,134.3 1033.0,129.7 1037.0,128.4 1041.0,123.5 1045.0,125.8 1049.0,130.8 1053.0,134.4 1057.0,138.2 1061.0,139.8 1065.0,139.5 1069.0,137.9 1073.0,137.4 1077.0,136.1 1081.0,134.8 1085.0,133.9 1089.0,132.8 1093.0,130.8 1097.0,130.5 1101.0,130.8 1105.0,131.2 1109.0,135.8 1113.0,140.2 1117.0,150.7 1121.0,158.8 1125.0,164.6 1129.0,168.6 1133.0,165.3 1137.0,162.3 1141.0,159.6 1145.0,155.3 1149.0,153.9 1153.0,153.3 1157.0,150.6 1161.0,153.4 1165.0,154.5 1169.0,155.1 1173.0,153.3 1177.0,147.7 1181.0,144.1 1185.0,144.7 1189.0,147.9 1193.0,150.4 1197.0,153.1 1201.0,152.0 1205.0,151.5 1209.0,151.0 1213.0,148.4 1217.0,148.3 1221.0,148.6 1225.0,150.3 1229.0,152.0 1233.0,151.6 1237.0,154.2 1241.0,157.1 1245.0,159.4 1249.0,162.9 1253.0,161.2 1257.0,156.2 1261.0,153.8 1265.0,146.0 1269.0,140.1 1273.0,135.7 1277.0,139.2 1281.0,146.4 1285.0,155.6 1289.0,163.8 1293.0,162.1 1297.0,160.9 1301.0,158.7 1305.0,158.8 1309.0,160.5 1313.0,163.4 1317.0,164.5 1321.0,165.0 1325.0,168.8 1329.0,174.4 1333.0,181.5 1337.0,187.9 1341.0,193.0 1345.0,195.0 1349.0,198.0 1353.0,197.8 1357.0,192.8 1361.0,187.1 1365.0,180.9 1369.0,179.0 1373.0,175.3 1377.0,172.4 1381.0,173.1 1385.0,171.4 1389.0,174.1 1393.0,178.1 1397.0,178.4 1401.0,177.7 1405.0,175.3 1409.0,169.8 1413.0,164.5 1417.0,161.2 1421.0,160.2 1425.0,162.6 1429.0,163.0 1433.0,163.3 1437.0,161.9 1441.0,160.9 1445.0,160.2 1449.0,158.7 1453.0,158.5 1457.0,154.2 1461.0,147.7 1465.0,142.0 1469.0,138.6 1473.0,138.9 1477.0,149.0 1481.0,160.2 1485.0,167.9 1489.0,173.2 1493.0,173.4 1497.0,172.7 1501.0,175.2 1505.0,180.5 1509.0,181.0 1513.0,181.7 1517.0,179.1" fill="none" stroke="#ff0000" stroke-width="1" />
<rect x="273" y="290" width="1" height="6" fill="#ff0000"/>
<rect x="272" y="291" width="3" height="4" fill="#ff0000"/>
<rect x="277" y="289" width="1" height="10" fill="#00ff00"/>
<rect x="276" y="292" width="3" height="3" fill="#00ff00"/>
<rect x="281" y="291" width="1" height="6" fill="#ff0000"/>
<rect x="280" y="292" width="3" height="3" fill="#ff0000"/>
<rect x="285" y="289" width="1" height="8" fill="#00ff00"/>
<rect x="284" y="292" width="3" height="1" fill="#00ff00"/>
<rect x="289" y="286" width="1" height="9" fill="#ff0000"/>
<rect x="288" y="288" width="3" height="5" fill="#ff0000"/>
<rect x="293" y="281" width="1" height="4" fill="#ff0000"/>
<rect x="292" y="283" width="3" height="2" fill="#ff0000"/>
<rect x="297" y="281" width="1" height="6" fill="#00ff00"/>
<rect x="296" y="283" width="3" height="2" fill="#00ff00"/>
<rect x="301" y="283" width="1" height="8" fill="#00ff00"/>
<rect x="300" y="284" width="3" height="6" fill="#00ff00"/>
<rect x="305" y="285" width="1" height="7" fill="#ff0000"/>
<rect x="304" y="285" width="3" height="5" fill="#ff0000"/>
<rect x="309" y="282" width="1" height="6" fill="#00ff00"/>
<rect x="308" y="285" width="3" height="2" fill="#00ff00"/>
<rect x="313" y="280" width="1" height="9" fill="#ff0000"/>
<rect x="312" y="280" width="3" height="7" fill="#ff0000"/>
<rect x="317" y="279" width="1" height="2" fill="#00ff00"/>
<rect x="316" y="279" width="3" height="2" fill="#00ff00"/>
<rect x="321" y="280" width="1" height="10" fill="#00ff00"/>
<rect x="320" y="280" width="3" height="5" fill="#00ff00"/>
<rect x="325" y="284" width="1" height="14" fill="#00ff00"/>
<rect x="324" y="285" width="3" height="11" fill="#00ff00"/>
<rect x="329" y="291" width="1" height="7" fill="#ff0000"/>
<rect x="328" y="294" width="3" height="2" fill="#ff0000"/>
<rect x="333" y="290" width="1" height="6" fill="#ff0000"/>
<rect x="332" y="290" width="3" height="5" fill="#ff0000"/>
<rect x="337" y="288" width="1" height="5" fill="#ff0000"/>
<rect x="336" y="288" width="3" height="3" fill="#ff0000"/>
<rect x="341" y="285" width="1" height="7" fill="#ff0000"/>
<rect x="340" y="286" width="3" height="2" fill="#ff0000"/>
<rect x="345" y="285" width="1" height="5" fill="#00ff00"/>
<rect x="344" y="286" width="3" height="2" fill="#00ff00"/>
<rect x="349" y="287" width="1" height="5" fill="#00ff00"/>
<rect x="348" y="287" width="3" height="2" fill="#00ff00"/>
<rect x="353" y="288" width="1" height="4" fill="#ff0000"/>
<rect x="352" y="288" width="3" height="2" fill="#ff0000"/>
<rect x="357" y="285" width="1" height="4" fill="#ff0000"/>
<rect x="356" y="285" width="3" height="4" fill="#ff0000"/>
<rect x="361" y="282" width="1" height="4" fill="#ff0000"/>
<rect x="360" y="282" width="3" height="4" fill="#ff0000"/>
<rect x="365" y="283" width="1" height="1" fill="#ff0000"/>
<rect x="364" y="283" width="3" height="1" fill="#ff0000"/>
<rect x="369" y="282" width="1" height="3" fill="#ff0000"/>
<rect x="368" y="282" width="3" height="2" fill="#ff0000"/>
<rect x="373" y="274" width="1" height="9" fill="#ff0000"/>
<rect x="372" y="274" width="3" height="8" fill="#ff0000"/>
<rect x="377" y="271" width="1" height="6" fill="#ff0000"/>
<rect x="376" y="272" width="3" height="5" fill="#ff0000"/>
<rect x="381" y="266" width="1" height="9" fill="#ff0000"/>
<rect x="380" y="267" width="3" height="7" fill="#ff0000"/>
<rect x="385" y="256" width="1" height="13" fill="#ff0000"/>
<rect x="384" y="257" width="3" height="12" fill="#ff0000"/>
<rect x="389" y="243" width="1" height="13" fill="#ff0000"/>
<rect x="388" y="249" width="3" height="5" fill="#ff0000"/>
<rect x="393" y="239" width="1" height="17" fill="#00ff00"/>
<rect x="392" y="249" width="3" height="6" fill="#00ff00"/>
<rect x="397" y="252" width="1" height="15" fill="#00ff00"/>
<rect x="396" y="254" width="3" height="6" fill="#00ff00"/>
<rect x="401" y="253" width="1" height="14" fill="#ff0000"/>
<rect x="400" y="257" width="3" height="3" fill="#ff0000"/>
<rect x="405" y="251" width="1" height="11" fill="#ff0000"/>
<rect x="404" y="256" width="3" height="3" fill="#ff0000"/>
<rect x="409" y="257" width="1" height="35" fill="#00ff00"/>
<rect x="408" y="257" width="3" height="26" fill="#00ff00"/>
<rect x="413" y="279" width="1" height="8" fill="#00ff00"/>
<rect x="412" y="281" width="3" height="3" fill="#00ff00"/>
<rect x="417" y="271" width="1" height="13" fill="#ff0000"/>
<rect x="416" y="279" width="3" height="4" fill="#ff0000"/>
<rect x="421" y="254" width="1" height="27" fill="#ff0000"/>
<rect x="420" y="257" width="3" height="24" fill="#ff0000"/>
<rect x="425" y="257" width="1" height="7" fill="#00ff00"/>
<rect x="424" y="257" width="3" height="5" fill="#00ff00"/>
<rect x="429" y="245" width="1" height="17" fill="#ff0000"/>
<rect x="428" y="245" width="3" height="17" fill="#ff0000"/>
<rect x="433" y="238" width="1" height="22" fill="#00ff00"/>
<rect x="432" y="245" width="3" height="1" fill="#00ff00"/>
<rect x="437" y="233" width="1" height="11" fill="#ff0000"/>
<rect x="436" y="235" width="3" height="5" fill="#ff0000"/>
<rect x="441" y="232" width="1" height="21" fill="#00ff00"/>
<rect x="440" y="234" width="3" height="16" fill="#00ff00"/>
<rect x="445" y="246" width="1" height="12" fill="#00ff00"/>
<rect x="444" y="248" width="3" height="7" fill="#00ff00"/>
<rect x="449" y="248" width="1" height="15" fill="#00ff00"/>
<rect x="448" y="254" width="3" height="5" fill="#00ff00"/>
<rect x="453" y="255" width="1" height="38" fill="#00ff00"/>
<rect x="452" y="255" width="3" height="31" fill="#00ff00"/>
<rect x="457" y="277" width="1" height="39" fill="#00ff00"/>
<rect x="456" y="285" width="3" height="21" fill="#00ff00"/>
<rect x="461" y="286" width="1" height="15" fill="#00ff00"/>
<rect x="460" y="290" width="3" height="5" fill="#00ff00"/>
<rect x="465" y="293" width="1" height="45" fill="#00ff00"/>
<rect x="464" y="293" width="3" height="22" fill="#00ff00"/>
<rect x="469" y="295" width="1" height="37" fill="#ff0000"/>
<rect x="468" y="301" width="3" height="14" fill="#ff0000"/>
<rect x="473" y="301" width="1" height="28" fill="#00ff00"/>
<rect x="472" y="301" width="3" height="18" fill="#00ff00"/>
<rect x="477" y="318" width="1" height="19" fill="#00ff00"/>
<rect x="476" y="318" width="3" height="12" fill="#00ff00"/>
<rect x="481" y="310" width="1" height="20" fill="#ff0000"/>
<rect x="480" y="318" width="3" height="12" fill="#ff0000"/>
<rect x="485" y="314" width="1" height="11" fill="#00ff00"/>
<rect x="484" y="316" width="3" height="5" fill="#00ff00"/>
<rect x="489" y="289" width="1" height="34" fill="#ff0000"/>
<rect x="488" y="289" width="3" height="32" fill="#ff0000"/>
<rect x="493" y="259" width="1" height="35" fill="#ff0000"/>
<rect x="492" y="260" width="3" height="30" fill="#ff0000"/>
<rect x="497" y="261" width="1" height="18" fill="#00ff00"/>
<rect x="496" y="261" width="3" height="12" fill="#00ff00"/>
<rect x="501" y="258" width="1" height="23" fill="#ff0000"/>
<rect x="500" y="264" width="3" height="9" fill="#ff0000"/>
<rect x="505" y="262" width="1" height="8" fill="#00ff00"/>
<rect x="504" y="264" width="3" height="5" fill="#00ff00"/>
<rect x="509" y="262" width="1" height="8" fill="#00ff00"/>
<rect x="508" y="266" width="3" height="1" fill="#00ff00"/>
<rect x="513" y="264" width="1" height="8" fill="#00ff00"/>
<rect x="512" y="264" width="3" height="6" fill="#00ff00"/>
<rect x="517" y="268" width="1" height="21" fill="#00ff00"/>
<rect x="516" y="268" width="3" height="18" fill="#00ff00"/>
<rect x="521" y="279" width="1" height="10" fill="#ff0000"/>
<rect x="520" y="279" width="3" height="7" fill="#ff0000"/>
<rect x="525" y="268" width="1" height="16" fill="#ff0000"/>
<rect x="524" y="270" width="3" height="11" fill="#ff0000"/>
<rect x="529" y="265" width="1" height="10" fill="#ff0000"/>
<rect x="528" y="268" width="3" height="3" fill="#ff0000"/>
<rect x="533" y="267" width="1" height="7" fill="#ff0000"/>
<rect x="532" y="268" width="3" height="2" fill="#ff0000"/>
<rect x="537" y="246" width="1" height="24" fill="#ff0000"/>
<rect x="536" y="249" width="3" height="21" fill="#ff0000"/>
<rect x="541" y="248" width="1" height="12" fill="#00ff00"/>
<rect x="540" y="250" width="3" height="8" fill="#00ff00"/>
<rect x="545" y="253" width="1" height="6" fill="#00ff00"/>
<rect x="544" y="255" width="3" height="3" fill="#00ff00"/>
<rect x="549" y="239" width="1" height="19" fill="#ff0000"/>
<rect x="548" y="242" width="3" height="15" fill="#ff0000"/>
<rect x="553" y="237" width="1" height="10" fill="#00ff00"/>
<rect x="552" y="240" width="3" height="2" fill="#00ff00"/>
<rect x="557" y="225" width="1" height="20" fill="#ff0000"/>
<rect x="556" y="228" width="3" height="13" fill="#ff0000"/>
<rect x="561" y="215" width="1" height="17" fill="#ff0000"/>
<rect x="560" y="224" width="3" height="5" fill="#ff0000"/>
<rect x="565" y="222" width="1" height="11" fill="#00ff00"/>
<rect x="564" y="224" width="3" height="5" fill="#00ff00"/>
<rect x="569" y="219" width="1" height="16" fill="#00ff00"/>
<rect x="568" y="228" width="3" height="2" fill="#00ff00"/>
<rect x="573" y="227" width="1" height="17" fill="#00ff00"/>
<rect x="572" y="229" width="3" height="13" fill="#00ff00"/>
<rect x="577" y="242" width="1" height="4" fill="#00ff00"/>
<rect x="576" y="242" width="3" height="4" fill="#00ff00"/>
<rect x="581" y="234" width="1" height="13" fill="#ff0000"/>
<rect x="580" y="237" width="3" height="9" fill="#ff0000"/>
<rect x="585" y="236" width="1" height="16" fill="#00ff00"/>
<rect x="584" y="238" width="3" height="3" fill="#00ff00"/>
<rect x="589" y="227" width="1" height="17" fill="#ff0000"/>
<rect x="588" y="230" width="3" height="11" fill="#ff0000"/>
<rect x="593" y="219" width="1" height="13" fill="#ff0000"/>
<rect x="592" y="223" width="3" height="8" fill="#ff0000"/>
<rect x="597" y="220" width="1" height="12" fill="#00ff00"/>
<rect x="596" y="223" width="3" height="2" fill="#00ff00"/>
<rect x="601" y="223" width="1" height="5" fill="#00ff00"/>
<rect x="600" y="223" width="3" height="3" fill="#00ff00"/>
<rect x="605" y="223" width="1" height="9" fill="#00ff00"/>
<rect x="604" y="225" width="3" height="7" fill="#00ff00"/>
<rect x="609" y="229" width="1" height="10" fill="#00ff00"/>
<rect x="608" y="231" width="3" height="2" fill="#00ff00"/>
<rect x="613" y="227" width="1" height="10" fill="#ff0000"/>
<rect x="612" y="228" width="3" height="6" fill="#ff0000"/>
<rect x="617" y="226" width="1" height="17" fill="#00ff00"/>
<rect x="616" y="229" width="3" height="12" fill="#00ff00"/>
<rect x="621" y="231" width="1" height="16" fill="#ff0000"/>
<rect x="620" y="234" width="3" height="6" fill="#ff0000"/>
<rect x="625" y="233" width="1" height="6" fill="#ff0000"/>
<rect x="624" y="234" width="3" height="2" fill="#ff0000"/>
<rect x="629" y="229" width="1" height="9" fill="#ff0000"/>
<rect x="628" y="233" width="3" height="3" fill="#ff0000"/>
<rect x="633" y="230" width="1" height="10" fill="#00ff00"/>
<rect x="632" y="233" width="3" height="1" fill="#00ff00"/>
<rect x="637" y="231" width="1" height="12" fill="#00ff00"/>
<rect x="636" y="233" width="3" height="7" fill="#00ff00"/>
<rect x="641" y="226" width="1" height="16" fill="#ff0000"/>
<rect x="640" y="229" width="3" height="11" fill="#ff0000"/>
<rect x="645" y="225" width="1" height="10" fill="#00ff00"/>
<rect x="644" y="229" width="3" height="4" fill="#00ff00"/>
<rect x="649" y="232" width="1" height="2" fill="#ff0000"/>
<rect x="648" y="232" width="3" height="2" fill="#ff0000"/>
<rect x="653" y="230" width="1" height="9" fill="#00ff00"/>
<rect x="652" y="232" width="3" height="5" fill="#00ff00"/>
<rect x="657" y="230" width="1" height="8" fill="#ff0000"/>
<rect x="656" y="233" width="3" height="4" fill="#ff0000"/>
<rect x="661" y="227" width="1" height="8" fill="#ff0000"/>
<rect x="660" y="227" width="3" height="8" fill="#ff0000"/>
<rect x="665" y="220" width="1" height="11" fill="#ff0000"/>
<rect x="664" y="220" width="3" height="10" fill="#ff0000"/>
<rect x="669" y="214" width="1" height="10" fill="#ff0000"/>
<rect x="668" y="216" width="3" height="7" fill="#ff0000"/>
<rect x="673" y="210" width="1" height="7" fill="#ff0000"/>
<rect x="672" y="210" width="3" height="7" fill="#ff0000"/>
<rect x="677" y="208" width="1" height="16" fill="#00ff00"/>
<rect x="676" y="211" width="3" height="10" fill="#00ff00"/>
<rect x="681" y="216" width="1" height="9" fill="#ff0000"/>
<rect x="680" y="216" width="3" height="6" fill="#ff0000"/>
<rect x="685" y="213" width="1" height="5" fill="#ff0000"/>
<rect x="684" y="214" width="3" height="3" fill="#ff0000"/>
<rect x="689" y="215" width="1" height="14" fill="#00ff00"/>
<rect x="688" y="215" width="3" height="10" fill="#00ff00"/>
<rect x="693" y="219" width="1" height="7" fill="#ff0000"/>
<rect x="692" y="219" width="3" height="6" fill="#ff0000"/>
<rect x="697" y="221" width="1" height="2" fill="#00ff00"/>
<rect x="696" y="221" width="3" height="2" fill="#00ff00"/>
<rect x="701" y="221" width="1" height="6" fill="#00ff00"/>
<rect x="700" y="222" width="3" height="3" fill="#00ff00"/>
<rect x="705" y="220" width="1" height="12" fill="#00ff00"/>
<rect x="704" y="224" width="3" height="6" fill="#00ff00"/>
<rect x="709" y="228" width="1" height="10" fill="#00ff00"/>
<rect x="708" y="229" width="3" height="2" fill="#00ff00"/>
<rect x="713" y="223" width="1" height="9" fill="#ff0000"/>
<rect x="712" y="226" width="3" height="6" fill="#ff0000"/>
<rect x="717" y="219" width="1" height="11" fill="#ff0000"/>
<rect x="716" y="222" width="3" height="5" fill="#ff0000"/>
<rect x="721" y="218" width="1" height="4" fill="#ff0000"/>
<rect x="720" y="218" width="3" height="4" fill="#ff0000"/>
<rect x="725" y="216" width="1" height="8" fill="#ff0000"/>
<rect x="724" y="218" width="3" height="1" fill="#ff0000"/>
<rect x="729" y="216" width="1" height="11" fill="#00ff00"/>
<rect x="728" y="218" width="3" height="7" fill="#00ff00"/>
<rect x="733" y="224" width="1" height="16" fill="#00ff00"/>
<rect x="732" y="224" width="3" height="13" fill="#00ff00"/>
<rect x="737" y="226" width="1" height="11" fill="#ff0000"/>
<rect x="736" y="228" width="3" height="8" fill="#ff0000"/>
<rect x="741" y="228" width="1" height="20" fill="#00ff00"/>
<rect x="740" y="228" width="3" height="14" fill="#00ff00"/>
<rect x="745" y="241" width="1" height="4" fill="#00ff00"/>
<rect x="744" y="241" width="3" height="2" fill="#00ff00"/>
<rect x="749" y="234" width="1" height="10" fill="#ff0000"/>
<rect x="748" y="236" width="3" height="7" fill="#ff0000"/>
<rect x="753" y="226" width="1" height="13" fill="#ff0000"/>
<rect x="752" y="228" width="3" height="9" fill="#ff0000"/>
<rect x="757" y="218" width="1" height="14" fill="#ff0000"/>
<rect x="756" y="220" width="3" height="11" fill="#ff0000"/>
<rect x="761" y="216" width="1" height="11" fill="#00ff00"/>
<rect x="760" y="220" width="3" height="5" fill="#00ff00"/>
<rect x="765" y="217" width="1" height="10" fill="#ff0000"/>
<rect x="764" y="222" width="3" height="4" fill="#ff0000"/>
<rect x="769" y="221" width="1" height="2" fill="#ff0000"/>
<rect x="768" y="221" width="3" height="2" fill="#ff0000"/>
<rect x="773" y="221" width="1" height="13" fill="#00ff00"/>
<rect x="772" y="221" width="3" height="5" fill="#00ff00"/>
<rect x="777" y="221" width="1" height="8" fill="#ff0000"/>
<rect x="776" y="223" width="3" height="3" fill="#ff0000"/>
<rect x="781" y="222" width="1" height="8" fill="#ff0000"/>
<rect x="780" y="223" width="3" height="2" fill="#ff0000"/>
<rect x="785" y="219" width="1" height="9" fill="#00ff00"/>
<rect x="784" y="223" width="3" height="3" fill="#00ff00"/>
<rect x="789" y="216" width="1" height="10" fill="#ff0000"/>
<rect x="788" y="218" width="3" height="8" fill="#ff0000"/>
<rect x="793" y="213" width="1" height="5" fill="#00ff00"/>
<rect x="792" y="214" width="3" height="2" fill="#00ff00"/>
<rect x="797" y="209" width="1" height="10" fill="#ff0000"/>
<rect x="796" y="212" width="3" height="3" fill="#ff0000"/>
<rect x="801" y="205" width="1" height="12" fill="#ff0000"/>
<rect x="800" y="206" width="3" height="8" fill="#ff0000"/>
<rect x="805" y="202" width="1" height="11" fill="#00ff00"/>
<rect x="804" y="206" width="3" height="5" fill="#00ff00"/>
<rect x="809" y="206" width="1" height="7" fill="#ff0000"/>
<rect x="808" y="208" width="3" height="3" fill="#ff0000"/>
<rect x="813" y="205" width="1" height="11" fill="#ff0000"/>
<rect x="812" y="206" width="3" height="3" fill="#ff0000"/>
<rect x="817" y="203" width="1" height="4" fill="#00ff00"/>
<rect x="816" y="204" width="3" height="2" fill="#00ff00"/>
<rect x="821" y="204" width="1" height="5" fill="#ff0000"/>
<rect x="820" y="205" width="3" height="2" fill="#ff0000"/>
<rect x="825" y="199" width="1" height="10" fill="#ff0000"/>
<rect x="824" y="201" width="3" height="6" fill="#ff0000"/>
<rect x="829" y="198" width="1" height="13" fill="#00ff00"/>
<rect x="828" y="201" width="3" height="7" fill="#00ff00"/>
<rect x="833" y="202" width="1" height="10" fill="#ff0000"/>
<rect x="832" y="203" width="3" height="5" fill="#ff0000"/>
<rect x="837" y="203" width="1" height="2" fill="#00ff00"/>
<rect x="836" y="203" width="3" height="2" fill="#00ff00"/>
<rect x="841" y="204" width="1" height="1" fill="#ff0000"/>
<rect x="840" y="204" width="3" height="1" fill="#ff0000"/>
<rect x="845" y="199" width="1" height="8" fill="#ff0000"/>
<rect x="844" y="199" width="3" height="6" fill="#ff0000"/>
<rect x="849" y="195" width="1" height="10" fill="#ff0000"/>
<rect x="848" y="196" width="3" height="5" fill="#ff0000"/>
<rect x="853" y="186" width="1" height="11" fill="#ff0000"/>
<rect x="852" y="190" width="3" height="7" fill="#ff0000"/>
<rect x="857" y="187" width="1" height="9" fill="#00ff00"/>
<rect x="856" y="190" width="3" height="3" fill="#00ff00"/>
<rect x="861" y="189" width="1" height="8" fill="#00ff00"/>
<rect x="860" y="192" width="3" height="3" fill="#00ff00"/>
<rect x="865" y="193" width="1" height="2" fill="#ff0000"/>
<rect x="864" y="193" width="3" height="2" fill="#ff0000"/>
<rect x="869" y="188" width="1" height="7" fill="#ff0000"/>
<rect x="868" y="192" width="3" height="3" fill="#ff0000"/>
<rect x="873" y="189" width="1" height="9" fill="#ff0000"/>
<rect x="872" y="190" width="3" height="3" fill="#ff0000"/>
<rect x="877" y="187" width="1" height="5" fill="#ff0000"/>
<rect x="876" y="188" width="3" height="4" fill="#ff0000"/>
<rect x="881" y="188" width="1" height="8" fill="#00ff00"/>
<rect x="880" y="188" width="3" height="6" fill="#00ff00"/>
<rect x="885" y="189" width="1" height="7" fill="#ff0000"/>
<rect x="884" y="189" width="3" height="6" fill="#ff0000"/>
<rect x="889" y="190" width="1" height="2" fill="#ff0000"/>
<rect x="888" y="190" width="3" height="2" fill="#ff0000"/>
<rect x="893" y="185" width="1" height="6" fill="#ff0000"/>
<rect x="892" y="186" width="3" height="5" fill="#ff0000"/>
<rect x="897" y="174" width="1" height="14" fill="#ff0000"/>
<rect x="896" y="176" width="3" height="12" fill="#ff0000"/>
<rect x="901" y="164" width="1" height="13" fill="#ff0000"/>
<rect x="900" y="164" width="3" height="13" fill="#ff0000"/>
<rect x="905" y="153" width="1" height="15" fill="#ff0000"/>
<rect x="904" y="158" width="3" height="7" fill="#ff0000"/>
<rect x="909" y="150" width="1" height="11" fill="#ff0000"/>
<rect x="908" y="152" width="3" height="7" fill="#ff0000"/>
<rect x="913" y="146" width="1" height="8" fill="#ff0000"/>
<rect x="912" y="146" width="3" height="7" fill="#ff0000"/>
<rect x="917" y="125" width="1" height="24" fill="#ff0000"/>
<rect x="916" y="125" width="3" height="23" fill="#ff0000"/>
<rect x="921" y="119" width="1" height="31" fill="#00ff00"/>
<rect x="920" y="126" width="3" height="4" fill="#00ff00"/>
<rect x="925" y="119" width="1" height="12" fill="#ff0000"/>
<rect x="924" y="125" width="3" height="5" fill="#ff0000"/>
<rect x="929" y="123" width="1" height="14" fill="#00ff00"/>
<rect x="928" y="124" width="3" height="6" fill="#00ff00"/>
<rect x="933" y="118" width="1" height="12" fill="#ff0000"/>
<rect x="932" y="122" width="3" height="8" fill="#ff0000"/>
<rect x="937" y="118" width="1" height="4" fill="#ff0000"/>
<rect x="936" y="119" width="3" height="1" fill="#ff0000"/>
<rect x="941" y="118" width="1" height="10" fill="#00ff00"/>
<rect x="940" y="118" width="3" height="4" fill="#00ff00"/>
<rect x="945" y="98" width="1" height="28" fill="#ff0000"/>
<rect x="944" y="98" width="3" height="24" fill="#ff0000"/>
<rect x="949" y="88" width="1" height="19" fill="#ff0000"/>
<rect x="948" y="96" width="3" height="2" fill="#ff0000"/>
<rect x="953" y="80" width="1" height="17" fill="#ff0000"/>
<rect x="952" y="82" width="3" height="15" fill="#ff0000"/>
<rect x="957" y="81" width="1" height="25" fill="#00ff00"/>
<rect x="956" y="82" width="3" height="17" fill="#00ff00"/>
<rect x="961" y="97" width="1" height="7" fill="#00ff00"/>
<rect x="960" y="97" width="3" height="4" fill="#00ff00"/>
<rect x="965" y="91" width="1" height="13" fill="#ff0000"/>
<rect x="964" y="96" width="3" height="4" fill="#ff0000"/>
<rect x="969" y="100" width="1" height="53" fill="#00ff00"/>
<rect x="968" y="100" width="3" height="50" fill="#00ff00"/>
<rect x="973" y="132" width="1" height="37" fill="#ff0000"/>
<rect x="972" y="143" width="3" height="7" fill="#ff0000"/>
<rect x="977" y="124" width="1" height="20" fill="#ff0000"/>
<rect x="976" y="129" width="3" height="16" fill="#ff0000"/>
<rect x="981" y="127" width="1" height="13" fill="#00ff00"/>
<rect x="980" y="129" width="3" height="6" fill="#00ff00"/>
<rect x="985" y="131" width="1" height="9" fill="#00ff00"/>
<rect x="984" y="134" width="3" height="6" fill="#00ff00"/>
<rect x="989" y="115" width="1" height="26" fill="#ff0000"/>
<rect x="988" y="118" width="3" height="22" fill="#ff0000"/>
<rect x="993" y="105" width="1" height="14" fill="#ff0000"/>
<rect x="992" y="109" width="3" height="10" fill="#ff0000"/>
<rect x="997" y="109" width="1" height="34" fill="#00ff00"/>
<rect x="996" y="109" width="3" height="32" fill="#00ff00"/>
<rect x="1001" y="127" width="1" height="16" fill="#ff0000"/>
<rect x="1000" y="131" width="3" height="11" fill="#ff0000"/>
<rect x="1005" y="130" width="1" height="19" fill="#00ff00"/>
<rect x="1004" y="131" width="3" height="7" fill="#00ff00"/>
<rect x="1009" y="136" width="1" height="6" fill="#00ff00"/>
<rect x="1008" y="136" width="3" height="3" fill="#00ff00"/>
<rect x="1013" y="127" width="1" height="17" fill="#00ff00"/>
<rect x="1012" y="138" width="3" height="3" fill="#00ff00"/>
<rect x="1017" y="137" width="1" height="10" fill="#00ff00"/>
<rect x="1016" y="139" width="3" height="1" fill="#00ff00"/>
<rect x="1021" y="130" width="1" height="22" fill="#ff0000"/>
<rect x="1020" y="130" width="3" height="11" fill="#ff0000"/>
<rect x="1025" y="121" width="1" height="28" fill="#00ff00"/>
<rect x="1024" y="130" width="3" height="12" fill="#00ff00"/>
<rect x="1029" y="122" width="1" height="22" fill="#ff0000"/>
<rect x="1028" y="126" width="3" height="16" fill="#ff0000"/>
<rect x="1033" y="122" width="1" height="5" fill="#ff0000"/>
<rect x="1032" y="122" width="3" height="5" fill="#ff0000"/>
<rect x="1037" y="121" width="1" height="10" fill="#00ff00"/>
<rect x="1036" y="122" width="3" height="3" fill="#00ff00"/>
<rect x="1041" y="114" width="1" height="13" fill="#ff0000"/>
<rect x="1040" y="122" width="3" height="3" fill="#ff0000"/>
<rect x="1045" y="122" width="1" height="18" fill="#00ff00"/>
<rect x="1044" y="122" width="3" height="13" fill="#00ff00"/>
<rect x="1049" y="130" width="1" height="13" fill="#00ff00"/>
<rect x="1048" y="134" width="3" height="8" fill="#00ff00"/>
<rect x="1053" y="133" width="1" height="13" fill="#ff0000"/>
<rect x="1052" y="139" width="3" height="3" fill="#ff0000"/>
<rect x="1057" y="137" width="1" height="3" fill="#ff0000"/>
<rect x="1056" y="137" width="3" height="3" fill="#ff0000"/>
<rect x="1061" y="135" width="1" height="8" fill="#00ff00"/>
<rect x="1060" y="138" width="3" height="3" fill="#00ff00"/>
<rect x="1065" y="136" width="1" height="15" fill="#00ff00"/>
<rect x="1064" y="139" width="3" height="2" fill="#00ff00"/>
<rect x="1069" y="131" width="1" height="14" fill="#ff0000"/>
<rect x="1068" y="133" width="3" height="8" fill="#ff0000"/>
<rect x="1073" y="125" width="1" height="11" fill="#00ff00"/>
<rect x="1072" y="133" width="3" height="2" fill="#00ff00"/>
<rect x="1077" y="130" width="1" height="8" fill="#00ff00"/>
<rect x="1076" y="134" width="3" height="2" fill="#00ff00"/>
<rect x="1081" y="135" width="1" height="2" fill="#ff0000"/>
<rect x="1080" y="135" width="3" height="2" fill="#ff0000"/>
<rect x="1085" y="127" width="1" height="9" fill="#ff0000"/>
<rect x="1084" y="129" width="3" height="7" fill="#ff0000"/>
<rect x="1089" y="123" width="1" height="10" fill="#00ff00"/>
<rect x="1088" y="129" width="3" height="2" fill="#00ff00"/>
<rect x="1093" y="122" width="1" height="10" fill="#ff0000"/>
<rect x="1092" y="128" width="3" height="4" fill="#ff0000"/>
<rect x="1097" y="128" width="1" height="11" fill="#00ff00"/>
<rect x="1096" y="128" width="3" height="6" fill="#00ff00"/>
<rect x="1101" y="128" width="1" height="7" fill="#ff0000"/>
<rect x="1100" y="130" width="3" height="4" fill="#ff0000"/>
<rect x="1105" y="130" width="1" height="3" fill="#00ff00"/>
<rect x="1104" y="132" width="3" height="1" fill="#00ff00"/>
<rect x="1109" y="130" width="1" height="31" fill="#00ff00"/>
<rect x="1108" y="132" width="3" height="14" fill="#00ff00"/>
<rect x="1113" y="144" width="1" height="11" fill="#00ff00"/>
<rect x="1112" y="144" width="3" height="8" fill="#00ff00"/>
<rect x="1117" y="151" width="1" height="21" fill="#00ff00"/>
<rect x="1116" y="151" width="3" height="21" fill="#00ff00"/>
<rect x="1121" y="162" width="1" height="11" fill="#ff0000"/>
<rect x="1120" y="166" width="3" height="6" fill="#ff0000"/>
<rect x="1125" y="163" width="1" height="9" fill="#00ff00"/>
<rect x="1124" y="166" width="3" height="3" fill="#00ff00"/>
<rect x="1129" y="168" width="1" height="2" fill="#ff0000"/>
<rect x="1128" y="168" width="3" height="2" fill="#ff0000"/>
<rect x="1133" y="159" width="1" height="14" fill="#ff0000"/>
<rect x="1132" y="159" width="3" height="10" fill="#ff0000"/>
<rect x="1137" y="153" width="1" height="7" fill="#ff0000"/>
<rect x="1136" y="153" width="3" height="7" fill="#ff0000"/>
<rect x="1141" y="151" width="1" height="9" fill="#00ff00"/>
<rect x="1140" y="154" width="3" height="4" fill="#00ff00"/>
<rect x="1145" y="148" width="1" height="10" fill="#ff0000"/>
<rect x="1144" y="151" width="3" height="7" fill="#ff0000"/>
<rect x="1149" y="145" width="1" height="12" fill="#00ff00"/>
<rect x="1148" y="149" width="3" height="4" fill="#00ff00"/>
<rect x="1153" y="151" width="1" height="3" fill="#ff0000"/>
<rect x="1152" y="151" width="3" height="3" fill="#ff0000"/>
<rect x="1157" y="145" width="1" height="13" fill="#ff0000"/>
<rect x="1156" y="147" width="3" height="6" fill="#ff0000"/>
<rect x="1161" y="144" width="1" height="20" fill="#00ff00"/>
<rect x="1160" y="147" width="3" height="15" fill="#00ff00"/>
<rect x="1165" y="156" width="1" height="8" fill="#ff0000"/>
<rect x="1164" y="158" width="3" height="4" fill="#ff0000"/>
<rect x="1169" y="152" width="1" height="9" fill="#ff0000"/>
<rect x="1168" y="153" width="3" height="6" fill="#ff0000"/>
<rect x="1173" y="140" width="1" height="15" fill="#ff0000"/>
<rect x="1172" y="140" width="3" height="15" fill="#ff0000"/>
<rect x="1177" y="139" width="1" height="4" fill="#ff0000"/>
<rect x="1176" y="140" width="3" height="3" fill="#ff0000"/>
<rect x="1181" y="138" width="1" height="7" fill="#00ff00"/>
<rect x="1180" y="140" width="3" height="4" fill="#00ff00"/>
<rect x="1185" y="142" width="1" height="18" fill="#00ff00"/>
<rect x="1184" y="142" width="3" height="14" fill="#00ff00"/>
<rect x="1189" y="147" width="1" height="14" fill="#ff0000"/>
<rect x="1188" y="153" width="3" height="4" fill="#ff0000"/>
<rect x="1193" y="147" width="1" height="11" fill="#ff0000"/>
<rect x="1192" y="150" width="3" height="4" fill="#ff0000"/>
<rect x="1197" y="147" width="1" height="7" fill="#00ff00"/>
<rect x="1196" y="150" width="3" height="4" fill="#00ff00"/>
<rect x="1201" y="151" width="1" height="3" fill="#ff0000"/>
<rect x="1200" y="152" width="3" height="1" fill="#ff0000"/>
<rect x="1205" y="145" width="1" height="10" fill="#ff0000"/>
<rect x="1204" y="151" width="3" height="3" fill="#ff0000"/>
<rect x="1209" y="147" width="1" height="9" fill="#ff0000"/>
<rect x="1208" y="148" width="3" height="4" fill="#ff0000"/>
<rect x="1213" y="140" width="1" height="10" fill="#ff0000"/>
<rect x="1212" y="144" width="3" height="5" fill="#ff0000"/>
<rect x="1217" y="143" width="1" height="13" fill="#00ff00"/>
<rect x="1216" y="144" width="3" height="7" fill="#00ff00"/>
<rect x="1221" y="147" width="1" height="9" fill="#00ff00"/>
<rect x="1220" y="150" width="3" height="2" fill="#00ff00"/>
<rect x="1225" y="151" width="1" height="6" fill="#00ff00"/>
<rect x="1224" y="151" width="3" height="3" fill="#00ff00"/>
<rect x="1229" y="149" width="1" height="6" fill="#ff0000"/>
<rect x="1228" y="151" width="3" height="4" fill="#ff0000"/>
<rect x="1233" y="148" width="1" height="6" fill="#ff0000"/>
<rect x="1232" y="150" width="3" height="3" fill="#ff0000"/>
<rect x="1237" y="148" width="1" height="18" fill="#00ff00"/>
<rect x="1236" y="150" width="3" height="12" fill="#00ff00"/>
<rect x="1241" y="159" width="1" height="11" fill="#00ff00"/>
<rect x="1240" y="161" width="3" height="5" fill="#00ff00"/>
<rect x="1245" y="158" width="1" height="11" fill="#ff0000"/>
<rect x="1244" y="160" width="3" height="6" fill="#ff0000"/>
<rect x="1249" y="161" width="1" height="2" fill="#00ff00"/>
<rect x="1248" y="161" width="3" height="2" fill="#00ff00"/>
<rect x="1253" y="154" width="1" height="10" fill="#ff0000"/>
<rect x="1252" y="155" width="3" height="8" fill="#ff0000"/>
<rect x="1257" y="146" width="1" height="10" fill="#ff0000"/>
<rect x="1256" y="146" width="3" height="10" fill="#ff0000"/>
<rect x="1261" y="146" width="1" height="15" fill="#00ff00"/>
<rect x="1260" y="146" width="3" height="4" fill="#00ff00"/>
<rect x="1265" y="131" width="1" height="21" fill="#ff0000"/>
<rect x="1264" y="133" width="3" height="19" fill="#ff0000"/>
<rect x="1269" y="128" width="1" height="11" fill="#ff0000"/>
<rect x="1268" y="131" width="3" height="3" fill="#ff0000"/>
<rect x="1273" y="128" width="1" height="3" fill="#ff0000"/>
<rect x="1272" y="128" width="3" height="3" fill="#ff0000"/>
<rect x="1277" y="125" width="1" height="49" fill="#00ff00"/>
<rect x="1276" y="128" width="3" height="37" fill="#00ff00"/>
<rect x="1281" y="157" width="1" height="11" fill="#ff0000"/>
<rect x="1280" y="161" width="3" height="5" fill="#ff0000"/>
<rect x="1285" y="160" width="1" height="11" fill="#00ff00"/>
<rect x="1284" y="160" width="3" height="8" fill="#00ff00"/>
<rect x="1289" y="159" width="1" height="10" fill="#ff0000"/>
<rect x="1288" y="161" width="3" height="7" fill="#ff0000"/>
<rect x="1293" y="154" width="1" height="10" fill="#ff0000"/>
<rect x="1292" y="158" width="3" height="5" fill="#ff0000"/>
<rect x="1297" y="157" width="1" height="1" fill="#ff0000"/>
<rect x="1296" y="157" width="3" height="1" fill="#ff0000"/>
<rect x="1301" y="153" width="1" height="15" fill="#00ff00"/>
<rect x="1300" y="156" width="3" height="3" fill="#00ff00"/>
<rect x="1305" y="154" width="1" height="11" fill="#00ff00"/>
<rect x="1304" y="156" width="3" height="6" fill="#00ff00"/>
<rect x="1309" y="160" width="1" height="8" fill="#00ff00"/>
<rect x="1308" y="160" width="3" height="5" fill="#00ff00"/>
<rect x="1313" y="163" width="1" height="10" fill="#00ff00"/>
<rect x="1312" y="163" width="3" height="6" fill="#00ff00"/>
<rect x="1317" y="163" width="1" height="6" fill="#ff0000"/>
<rect x="1316" y="163" width="3" height="6" fill="#ff0000"/>
<rect x="1321" y="164" width="1" height="2" fill="#ff0000"/>
<rect x="1320" y="164" width="3" height="2" fill="#ff0000"/>
<rect x="1325" y="162" width="1" height="20" fill="#00ff00"/>
<rect x="1324" y="164" width="3" height="16" fill="#00ff00"/>
<rect x="1329" y="178" width="1" height="16" fill="#00ff00"/>
<rect x="1328" y="178" width="3" height="12" fill="#00ff00"/>
<rect x="1333" y="186" width="1" height="8" fill="#00ff00"/>
<rect x="1332" y="189" width="3" height="2" fill="#00ff00"/>
<rect x="1337" y="188" width="1" height="4" fill="#ff0000"/>
<rect x="1336" y="190" width="3" height="2" fill="#ff0000"/>
<rect x="1341" y="188" width="1" height="17" fill="#00ff00"/>
<rect x="1340" y="189" width="3" height="12" fill="#00ff00"/>
<rect x="1345" y="198" width="1" height="3" fill="#ff0000"/>
<rect x="1344" y="199" width="3" height="1" fill="#ff0000"/>
<rect x="1349" y="199" width="1" height="10" fill="#00ff00"/>
<rect x="1348" y="199" width="3" height="4" fill="#00ff00"/>
<rect x="1353" y="187" width="1" height="17" fill="#ff0000"/>
<rect x="1352" y="189" width="3" height="14" fill="#ff0000"/>
<rect x="1357" y="181" width="1" height="9" fill="#ff0000"/>
<rect x="1356" y="181" width="3" height="9" fill="#ff0000"/>
<rect x="1361" y="176" width="1" height="9" fill="#ff0000"/>
<rect x="1360" y="176" width="3" height="7" fill="#ff0000"/>
<rect x="1365" y="174" width="1" height="8" fill="#00ff00"/>
<rect x="1364" y="176" width="3" height="2" fill="#00ff00"/>
<rect x="1369" y="177" width="1" height="5" fill="#00ff00"/>
<rect x="1368" y="178" width="3" height="3" fill="#00ff00"/>
<rect x="1373" y="165" width="1" height="19" fill="#ff0000"/>
<rect x="1372" y="166" width="3" height="14" fill="#ff0000"/>
<rect x="1377" y="164" width="1" height="7" fill="#ff0000"/>
<rect x="1376" y="164" width="3" height="4" fill="#ff0000"/>
<rect x="1381" y="165" width="1" height="16" fill="#00ff00"/>
<rect x="1380" y="165" width="3" height="16" fill="#00ff00"/>
<rect x="1385" y="173" width="1" height="9" fill="#ff0000"/>
<rect x="1384" y="174" width="3" height="4" fill="#ff0000"/>
<rect x="1389" y="174" width="1" height="11" fill="#ff0000"/>
<rect x="1388" y="176" width="3" height="2" fill="#ff0000"/>
<rect x="1393" y="177" width="1" height="4" fill="#00ff00"/>
<rect x="1392" y="178" width="3" height="2" fill="#00ff00"/>
<rect x="1397" y="178" width="1" height="9" fill="#00ff00"/>
<rect x="1396" y="178" width="3" height="5" fill="#00ff00"/>
<rect x="1401" y="172" width="1" height="12" fill="#ff0000"/>
<rect x="1400" y="172" width="3" height="12" fill="#ff0000"/>
<rect x="1405" y="167" width="1" height="6" fill="#ff0000"/>
<rect x="1404" y="167" width="3" height="6" fill="#ff0000"/>
<rect x="1409" y="154" width="1" height="14" fill="#ff0000"/>
<rect x="1408" y="158" width="3" height="10" fill="#ff0000"/>
<rect x="1413" y="157" width="1" height="6" fill="#00ff00"/>
<rect x="1412" y="159" width="3" height="3" fill="#00ff00"/>
<rect x="1417" y="158" width="1" height="3" fill="#ff0000"/>
<rect x="1416" y="159" width="3" height="1" fill="#ff0000"/>
<rect x="1421" y="150" width="1" height="22" fill="#00ff00"/>
<rect x="1420" y="159" width="3" height="4" fill="#00ff00"/>
<rect x="1425" y="161" width="1" height="7" fill="#00ff00"/>
<rect x="1424" y="161" width="3" height="7" fill="#00ff00"/>
<rect x="1429" y="163" width="1" height="8" fill="#ff0000"/>
<rect x="1428" y="163" width="3" height="5" fill="#ff0000"/>
<rect x="1433" y="160" width="1" height="4" fill="#ff0000"/>
<rect x="1432" y="160" width="3" height="4" fill="#ff0000"/>
<rect x="1437" y="157" width="1" height="3" fill="#ff0000"/>
<rect x="1436" y="157" width="3" height="3" fill="#ff0000"/>
<rect x="1441" y="152" width="1" height="14" fill="#00ff00"/>
<rect x="1440" y="157" width="3" height="7" fill="#00ff00"/>
<rect x="1445" y="160" width="1" height="3" fill="#ff0000"/>
<rect x="1444" y="160" width="3" height="3" fill="#ff0000"/>
<rect x="1449" y="154" width="1" height="8" fill="#ff0000"/>
<rect x="1448" y="154" width="3" height="8" fill="#ff0000"/>
<rect x="1453" y="152" width="1" height="7" fill="#00ff00"/>
<rect x="1452" y="153" width="3" height="3" fill="#00ff00"/>
<rect x="1457" y="146" width="1" height="5" fill="#ff0000"/>
<rect x="1456" y="146" width="3" height="5" fill="#ff0000"/>
<rect x="1461" y="134" width="1" height="15" fill="#ff0000"/>
<rect x="1460" y="134" width="3" height="15" fill="#ff0000"/>
<rect x="1465" y="130" width="1" height="9" fill="#ff0000"/>
<rect x="1464" y="131" width="3" height="5" fill="#ff0000"/>
<rect x="1469" y="128" width="1" height="25" fill="#00ff00"/>
<rect x="1468" y="130" width="3" height="12" fill="#00ff00"/>
<rect x="1473" y="140" width="1" height="10" fill="#00ff00"/>
<rect x="1472" y="142" width="3" height="6" fill="#00ff00"/>
<rect x="1477" y="146" width="1" height="37" fill="#00ff00"/>
<rect x="1476" y="146" width="3" height="28" fill="#00ff00"/>
<rect x="1481" y="170" width="1" height="7" fill="#00ff00"/>
<rect x="1480" y="170" width="3" height="6" fill="#00ff00"/>
<rect x="1485" y="171" width="1" height="17" fill="#ff0000"/>
<rect x="1484" y="174" width="3" height="2" fill="#ff0000"/>
<rect x="1489" y="169" width="1" height="10" fill="#ff0000"/>
<rect x="1488" y="169" width="3" height="6" fill="#ff0000"/>
<rect x="1493" y="168" width="1" height="9" fill="#00ff00"/>
<rect x="1492" y="168" width="3" height="7" fill="#00ff00"/>
<rect x="1497" y="170" width="1" height="5" fill="#ff0000"/>
<rect x="1496" y="173" width="3" height="1" fill="#ff0000"/>
<rect x="1501" y="170" width="1" height="14" fill="#00ff00"/>
<rect x="1500" y="173" width="3" height="11" fill="#00ff00"/>
<rect x="1505" y="181" width="1" height="13" fill="#00ff00"/>
<rect x="1504" y="181" width="3" height="9" fill="#00ff00"/>
<rect x="1509" y="177" width="1" height="12" fill="#ff0000"/>
<rect x="1508" y="177" width="3" height="12" fill="#ff0000"/>
<rect x="1513" y="176" width="1" height="4" fill="#ff0000"/>
<rect x="1512" y="176" width="3" height="4" fill="#ff0000"/>
<rect x="1517" y="173" width="1" height="5" fill="#ff0000"/>
<rect x="1516" y="174" width="3" height="4" fill="#ff0000"/>
<rect x="272" y="426" width="3" height="6" fill="#ff0000"/>
<rect x="276" y="426" width="3" height="8" fill="#640000"/>
<rect x="280" y="426" width="3" height="9" fill="#640000"/>
<rect x="284" y="426" width="3" height="9" fill="#640000"/>
<rect x="288" y="426" width="3" height="8" fill="#ff0000"/>
<rect x="292" y="426" width="3" height="5" fill="#ff0000"/>
<rect x="296" y="426" width="3" height="3" fill="#ff0000"/>
<rect x="300" y="426" width="3" height="4" fill="#640000"/>
<rect x="304" y="426" width="3" height="3" fill="#ff0000"/>
<rect x="308" y="426" width="3" height="3" fill="#640000"/>
<rect x="312" y="426" width="3" height="1" fill="#ff0000"/>
<rect x="316" y="426" width="3" height="1" fill="#ff0000"/>
<rect x="320" y="426" width="3" height="2" fill="#640000"/>
<rect x="324" y="426" width="3" height="7" fill="#640000"/>
<rect x="328" y="426" width="3" height="10" fill="#640000"/>
<rect x="332" y="426" width="3" height="10" fill="#640000"/>
<rect x="336" y="426" width="3" height="9" fill="#ff0000"/>
<rect x="340" y="426" width="3" height="7" fill="#ff0000"/>
<rect x="344" y="426" width="3" height="7" fill="#ff0000"/>
<rect x="348" y="426" width="3" height="7" fill="#ff0000"/>
<rect x="352" y="426" width="3" height="6" fill="#ff0000"/>
<rect x="356" y="426" width="3" height="3" fill="#ff0000"/>
<rect x="360" y="426" width="3" height="1" fill="#ff0000"/>
<rect x="364" y="426" width="3" height="1" fill="#ff0000"/>
<rect x="368" y="425" width="3" height="1" fill="#32cd32"/>
<rect x="372" y="422" width="3" height="4" fill="#32cd32"/>
<rect x="376" y="420" width="3" height="6" fill="#32cd32"/>
<rect x="380" y="416" width="3" height="10" fill="#32cd32"/>
<rect x="384" y="411" width="3" height="15" fill="#32cd32"/>
<rect x="388" y="406" width="3" height="20" fill="#32cd32"/>
<rect x="392" y="406" width="3" height="20" fill="#004b00"/>
<rect x="396" y="410" width="3" height="16" fill="#004b00"/>
<rect x="400" y="412" width="3" height="14" fill="#004b00"/>
<rect x="404" y="415" width="3" height="11" fill="#004b00"/>
<rect x="408" y="426" width="3" height="2" fill="#640000"/>
<rect x="412" y="426" width="3" height="12" fill="#640000"/>
<rect x="416" y="426" width="3" height="17" fill="#640000"/>
<rect x="420" y="426" width="3" height="12" fill="#ff0000"/>
<rect x="424" y="426" width="3" height="9" fill="#ff0000"/>
<rect x="428" y="426" width="3" height="1" fill="#ff0000"/>
<rect x="432" y="421" width="3" height="5" fill="#32cd32"/>
<rect x="436" y="414" width="3" height="12" fill="#32cd32"/>
<rect x="440" y="414" width="3" height="12" fill="#004b00"/>
<rect x="444" y="417" width="3" height="9" fill="#004b00"/>
<rect x="448" y="423" width="3" height="3" fill="#004b00"/>
<rect x="452" y="426" width="3" height="12" fill="#640000"/>
<rect x="456" y="426" width="3" height="29" fill="#640000"/>
<rect x="460" y="426" width="3" height="36" fill="#640000"/>
<rect x="464" y="426" width="3" height="46" fill="#640000"/>
<rect x="468" y="426" width="3" height="46" fill="#ff0000"/>
<rect x="472" y="426" width="3" height="48" fill="#640000"/>
<rect x="476" y="426" width="3" height="51" fill="#640000"/>
<rect x="480" y="426" width="3" height="44" fill="#ff0000"/>
<rect x="484" y="426" width="3" height="37" fill="#ff0000"/>
<rect x="488" y="426" width="3" height="19" fill="#ff0000"/>
<rect x="492" y="421" width="3" height="5" fill="#32cd32"/>
<rect x="496" y="408" width="3" height="18" fill="#32cd32"/>
<rect x="500" y="396" width="3" height="30" fill="#32cd32"/>
<rect x="504" y="391" width="3" height="35" fill="#32cd32"/>
<rect x="508" y="389" width="3" height="37" fill="#32cd32"/>
<rect x="512" y="392" width="3" height="34" fill="#004b00"/>
<rect x="516" y="402" width="3" height="24" fill="#004b00"/>
<rect x="520" y="409" width="3" height="17" fill="#004b00"/>
<rect x="524" y="412" width="3" height="14" fill="#004b00"/>
<rect x="528" y="414" width="3" height="12" fill="#004b00"/>
<rect x="532" y="416" width="3" height="10" fill="#004b00"/>
<rect x="536" y="410" width="3" height="16" fill="#32cd32"/>
<rect x="540" y="410" width="3" height="16" fill="#32cd32"/>
<rect x="544" y="410" width="3" height="16" fill="#004b00"/>
<rect x="548" y="406" width="3" height="20" fill="#32cd32"/>
<rect x="552" y="404" width="3" height="22" fill="#32cd32"/>
<rect x="556" y="400" width="3" height="26" fill="#32cd32"/>
<rect x="560" y="398" width="3" height="28" fill="#32cd32"/>
<rect x="564" y="400" width="3" height="26" fill="#004b00"/>
<rect x="568" y="404" width="3" height="22" fill="#004b00"/>
<rect x="572" y="413" width="3" height="13" fill="#004b00"/>
<rect x="576" y="421" width="3" height="5" fill="#004b00"/>
<rect x="580" y="426" width="3" height="1" fill="#004b00"/>
<rect x="584" y="426" width="3" height="5" fill="#640000"/>
<rect x="588" y="426" width="3" height="5" fill="#640000"/>
<rect x="592" y="426" width="3" height="2" fill="#ff0000"/>
<rect x="596" y="426" width="3" height="1" fill="#ff0000"/>
<rect x="600" y="426" width="3" height="1" fill="#ff0000"/>
<rect x="604" y="426" width="3" height="2" fill="#640000"/>
<rect x="608" y="426" width="3" height="5" fill="#640000"/>
<rect x="612" y="426" width="3" height="5" fill="#640000"/>
<rect x="616" y="426" width="3" height="10" fill="#640000"/>
<rect x="620" y="426" width="3" height="12" fill="#640000"/>
<rect x="624" y="426" width="3" height="13" fill="#640000"/>
<rect x="628" y="426" width="3" height="13" fill="#ff0000"/>
<rect x="632" y="426" width="3" height="12" fill="#ff0000"/>
<rect x="636" y="426" width="3" height="14" fill="#640000"/>
<rect x="640" y="426" width="3" height="10" fill="#ff0000"/>
<rect x="644" y="426" width="3" height="9" fill="#ff0000"/>
<rect x="648" y="426" width="3" height="8" fill="#ff0000"/>
<rect x="652" y="426" width="3" height="8" fill="#640000"/>
<rect x="656" y="426" width="3" height="7" fill="#ff0000"/>
<rect x="660" y="426" width="3" height="5" fill="#ff0000"/>
<rect x="664" y="426" width="3" height="1" fill="#ff0000"/>
<rect x="668" y="422" width="3" height="4" fill="#32cd32"/>
<rect x="672" y="417" width="3" height="9" fill="#32cd32"/>
<rect x="676" y="419" width="3" height="7" fill="#004b00"/>
<rect x="680" y="418" width="3" height="8" fill="#32cd32"/>
<rect x="684" y="419" width="3" height="7" fill="#004b00"/>
<rect x="688" y="424" width="3" height="2" fill="#004b00"/>
<rect x="692" y="426" width="3" height="1" fill="#004b00"/>
<rect x="696" y="426" width="3" height="3" fill="#640000"/>
<rect x="700" y="426" width="3" height="6" fill="#640000"/>
<rect x="704" y="426" width="3" height="10" fill="#640000"/>
<rect x="708" y="426" width="3" height="13" fill="#640000"/>
<rect x="712" y="426" width="3" height="12" fill="#ff0000"/>
<rect x="716" y="426" width="3" height="10" fill="#ff0000"/>
<rect x="720" y="426" width="3" height="6" fill="#ff0000"/>
<rect x="724" y="426" width="3" height="3" fill="#ff0000"/>
<rect x="728" y="426" width="3" height="3" fill="#640000"/>
<rect x="732" y="426" width="3" height="8" fill="#640000"/>
<rect x="736" y="426" width="3" height="8" fill="#ff0000"/>
<rect x="740" y="426" width="3" height="12" fill="#640000"/>
<rect x="744" y="426" width="3" height="16" fill="#640000"/>
<rect x="748" y="426" width="3" height="15" fill="#ff0000"/>
<rect x="752" y="426" width="3" height="11" fill="#ff0000"/>
<rect x="756" y="426" width="3" height="4" fill="#ff0000"/>
<rect x="760" y="426" width="3" height="1" fill="#ff0000"/>
<rect x="764" y="423" width="3" height="3" fill="#32cd32"/>
<rect x="768" y="420" width="3" height="6" fill="#32cd32"/>
<rect x="772" y="420" width="3" height="6" fill="#004b00"/>
<rect x="776" y="420" width="3" height="6" fill="#32cd32"/>
<rect x="780" y="421" width="3" height="5" fill="#004b00"/>
<rect x="784" y="423" width="3" height="3" fill="#004b00"/>
<rect x="788" y="422" width="3" height="4" fill="#32cd32"/>
<rect x="792" y="420" width="3" height="6" fill="#32cd32"/>
<rect x="796" y="418" width="3" height="8" fill="#32cd32"/>
<rect x="800" y="415" width="3" height="11" fill="#32cd32"/>
<rect x="804" y="415" width="3" height="11" fill="#004b00"/>
<rect x="808" y="415" width="3" height="11" fill="#32cd32"/>
<rect x="812" y="415" width="3" height="11" fill="#32cd32"/>
<rect x="816" y="416" width="3" height="10" fill="#004b00"/>
<rect x="820" y="417" width="3" height="9" fill="#004b00"/>
<rect x="824" y="418" width="3" height="8" fill="#004b00"/>
<rect x="828" y="421" width="3" height="5" fill="#004b00"/>
<rect x="832" y="422" width="3" height="4" fill="#004b00"/>
<rect x="836" y="424" width="3" height="2" fill="#004b00"/>
<rect x="840" y="426" width="3" height="1" fill="#004b00"/>
<rect x="844" y="425" width="3" height="1" fill="#32cd32"/>
<rect x="848" y="424" width="3" height="2" fill="#32cd32"/>
<rect x="852" y="421" width="3" height="5" fill="#32cd32"/>
<rect x="856" y="421" width="3" height="5" fill="#32cd32"/>
<rect x="860" y="422" width="3" height="4" fill="#004b00"/>
<rect x="864" y="422" width="3" height="4" fill="#004b00"/>
<rect x="868" y="423" width="3" height="3" fill="#004b00"/>
<rect x="872" y="424" width="3" height="2" fill="#004b00"/>
<rect x="876" y="424" width="3" height="2" fill="#004b00"/>
<rect x="880" y="426" width="3" height="1" fill="#640000"/>
<rect x="884" y="426" width="3" height="1" fill="#640000"/>
<rect x="888" y="426" width="3" height="2" fill="#640000"/>
<rect x="892" y="426" width="3" height="1" fill="#ff0000"/>
<rect x="896" y="423" width="3" height="3" fill="#32cd32"/>
<rect x="900" y="417" width="3" height="9" fill="#32cd32"/>
<rect x="904" y="412" width="3" height="14" fill="#32cd32"/>
<rect x="908" y="406" width="3" height="20" fill="#32cd32"/>
<rect x="912" y="402" width="3" height="24" fill="#32cd32"/>
<rect x="916" y="394" width="3" height="32" fill="#32cd32"/>
<rect x="920" y="393" width="3" height="33" fill="#32cd32"/>
<rect x="924" y="393" width="3" height="33" fill="#004b00"/>
<rect x="928" y="397" width="3" height="29" fill="#004b00"/>
<rect x="932" y="401" width="3" height="25" fill="#004b00"/>
<rect x="936" y="404" width="3" height="22" fill="#004b00"/>
<rect x="940" y="410" width="3" height="16" fill="#004b00"/>
<rect x="944" y="408" width="3" height="18" fill="#32cd32"/>
<rect x="948" y="407" width="3" height="19" fill="#32cd32"/>
<rect x="952" y="404" width="3" height="22" fill="#32cd32"/>
<rect x="956" y="410" width="3" height="16" fill="#004b00"/>
<rect x="960" y="416" width="3" height="10" fill="#004b00"/>
<rect x="964" y="421" width="3" height="5" fill="#004b00"/>
<rect x="968" y="426" width="3" height="18" fill="#640000"/>
<rect x="972" y="426" width="3" height="33" fill="#640000"/>
<rect x="976" y="426" width="3" height="38" fill="#640000"/>
<rect x="980" y="426" width="3" height="42" fill="#640000"/>
<rect x="984" y="426" width="3" height="45" fill="#640000"/>
<rect x="988" y="426" width="3" height="37" fill="#ff0000"/>
<rect x="992" y="426" width="3" height="26" fill="#ff0000"/>
<rect x="996" y="426" width="3" height="28" fill="#640000"/>
<rect x="1000" y="426" width="3" height="24" fill="#ff0000"/>
<rect x="1004" y="426" width="3" height="24" fill="#ff0000"/>
<rect x="1008" y="426" width="3" height="24" fill="#640000"/>
<rect x="1012" y="426" width="3" height="24" fill="#ff0000"/>
<rect x="1016" y="426" width="3" height="23" fill="#ff0000"/>
<rect x="1020" y="426" width="3" height="18" fill="#ff0000"/>
<rect x="1024" y="426" width="3" height="18" fill="#ff0000"/>
<rect x="1028" y="426" width="3" height="11" fill="#ff0000"/>
<rect x="1032" y="426" width="3" height="4" fill="#ff0000"/>
<rect x="1036" y="426" width="3" height="1" fill="#ff0000"/>
<rect x="1040" y="423" width="3" height="3" fill="#32cd32"/>
<rect x="1044" y="426" width="3" height="1" fill="#004b00"/>
<rect x="1048" y="426" width="3" height="4" fill="#640000"/>
<rect x="1052" y="426" width="3" height="7" fill="#640000"/>
<rect x="1056" y="426" width="3" height="8" fill="#640000"/>
<rect x="1060" y="426" width="3" height="10" fill="#640000"/>
<rect x="1064" y="426" width="3" height="11" fill="#640000"/>
<rect x="1068" y="426" width="3" height="8" fill="#ff0000"/>
<rect x="1072" y="426" width="3" height="6" fill="#ff0000"/>
<rect x="1076" y="426" width="3" height="4" fill="#ff0000"/>
<rect x="1080" y="426" width="3" height="2" fill="#ff0000"/>
<rect x="1084" y="425" width="3" height="1" fill="#32cd32"/>
<rect x="1088" y="423" width="3" height="3" fill="#32cd32"/>
<rect x="1092" y="421" width="3" height="5" fill="#32cd32"/>
<rect x="1096" y="423" width="3" height="3" fill="#004b00"/>
<rect x="1100" y="423" width="3" height="3" fill="#32cd32"/>
<rect x="1104" y="424" width="3" height="2" fill="#004b00"/>
<rect x="1108" y="426" width="3" height="3" fill="#640000"/>
<rect x="1112" y="426" width="3" height="9" fill="#640000"/>
<rect x="1116" y="426" width="3" height="20" fill="#640000"/>
<rect x="1120" y="426" width="3" height="24" fill="#640000"/>
<rect x="1124" y="426" width="3" height="27" fill="#640000"/>
<rect x="1128" y="426" width="3" height="26" fill="#ff0000"/>
<rect x="1132" y="426" width="3" height="21" fill="#ff0000"/>
<rect x="1136" y="426" width="3" height="14" fill="#ff0000"/>
<rect x="1140" y="426" width="3" height="8" fill="#ff0000"/>
<rect x="1144" y="426" width="3" height="1" fill="#ff0000"/>
<rect x="1148" y="422" width="3" height="4" fill="#32cd32"/>
<rect x="1152" y="418" width="3" height="8" fill="#32cd32"/>
<rect x="1156" y="415" width="3" height="11" fill="#32cd32"/>
<rect x="1160" y="418" width="3" height="8" fill="#004b00"/>
<rect x="1164" y="420" width="3" height="6" fill="#004b00"/>
<rect x="1168" y="420" width="3" height="6" fill="#32cd32"/>
<rect x="1172" y="415" width="3" height="11" fill="#32cd32"/>
<rect x="1176" y="412" width="3" height="14" fill="#32cd32"/>
<rect x="1180" y="412" width="3" height="14" fill="#32cd32"/>
<rect x="1184" y="416" width="3" height="10" fill="#004b00"/>
<rect x="1188" y="419" width="3" height="7" fill="#004b00"/>
<rect x="1192" y="420" width="3" height="6" fill="#004b00"/>
<rect x="1196" y="422" width="3" height="4" fill="#004b00"/>
<rect x="1200" y="424" width="3" height="2" fill="#004b00"/>
<rect x="1204" y="425" width="3" height="1" fill="#004b00"/>
<rect x="1208" y="424" width="3" height="2" fill="#32cd32"/>
<rect x="1212" y="422" width="3" height="4" fill="#32cd32"/>
<rect x="1216" y="423" width="3" height="3" fill="#004b00"/>
<rect x="1220" y="424" width="3" height="2" fill="#004b00"/>
<rect x="1224" y="425" width="3" height="1" fill="#004b00"/>
<rect x="1228" y="425" width="3" height="1" fill="#32cd32"/>
<rect x="1232" y="425" width="3" height="1" fill="#32cd32"/>
<rect x="1236" y="426" width="3" height="3" fill="#640000"/>
<rect x="1240" y="426" width="3" height="8" fill="#640000"/>
<rect x="1244" y="426" width="3" height="8" fill="#640000"/>
<rect x="1248" y="426" width="3" height="9" fill="#640000"/>
<rect x="1252" y="426" width="3" height="5" fill="#ff0000"/>
<rect x="1256" y="426" width="3" height="1" fill="#32cd32"/>
<rect x="1260" y="423" width="3" height="3" fill="#32cd32"/>
<rect x="1264" y="415" width="3" height="11" fill="#32cd32"/>
<rect x="1268" y="409" width="3" height="17" fill="#32cd32"/>
<rect x="1272" y="404" width="3" height="22" fill="#32cd32"/>
<rect x="1276" y="416" width="3" height="10" fill="#004b00"/>
<rect x="1280" y="423" width="3" height="3" fill="#004b00"/>
<rect x="1284" y="426" width="3" height="6" fill="#640000"/>
<rect x="1288" y="426" width="3" height="9" fill="#640000"/>
<rect x="1292" y="426" width="3" height="10" fill="#640000"/>
<rect x="1296" y="426" width="3" height="10" fill="#ff0000"/>
<rect x="1300" y="426" width="3" height="9" fill="#ff0000"/>
<rect x="1304" y="426" width="3" height="9" fill="#ff0000"/>
<rect x="1308" y="426" width="3" height="8" fill="#ff0000"/>
<rect x="1312" y="426" width="3" height="8" fill="#640000"/>
<rect x="1316" y="426" width="3" height="6" fill="#ff0000"/>
<rect x="1320" y="426" width="3" height="5" fill="#ff0000"/>
<rect x="1324" y="426" width="3" height="9" fill="#640000"/>
<rect x="1328" y="426" width="3" height="16" fill="#640000"/>
<rect x="1332" y="426" width="3" height="19" fill="#640000"/>
<rect x="1336" y="426" width="3" height="20" fill="#640000"/>
<rect x="1340" y="426" width="3" height="22" fill="#640000"/>
<rect x="1344" y="426" width="3" height="22" fill="#ff0000"/>
<rect x="1348" y="426" width="3" height="22" fill="#ff0000"/>
<rect x="1352" y="426" width="3" height="15" fill="#ff0000"/>
<rect x="1356" y="426" width="3" height="5" fill="#ff0000"/>
<rect x="1360" y="421" width="3" height="5" fill="#32cd32"/>
<rect x="1364" y="416" width="3" height="10" fill="#32cd32"/>
<rect x="1368" y="413" width="3" height="13" fill="#32cd32"/>
<rect x="1372" y="406" width="3" height="20" fill="#32cd32"/>
<rect x="1376" y="401" width="3" height="25" fill="#32cd32"/>
<rect x="1380" y="406" width="3" height="20" fill="#004b00"/>
<rect x="1384" y="408" width="3" height="18" fill="#004b00"/>
<rect x="1388" y="411" width="3" height="15" fill="#004b00"/>
<rect x="1392" y="415" width="3" height="11" fill="#004b00"/>
<rect x="1396" y="419" width="3" height="7" fill="#004b00"/>
<rect x="1400" y="419" width="3" height="7" fill="#32cd32"/>
<rect x="1404" y="417" width="3" height="9" fill="#32cd32"/>
<rect x="1408" y="412" width="3" height="14" fill="#32cd32"/>
<rect x="1412" y="411" width="3" height="15" fill="#32cd32"/>
<rect x="1416" y="409" width="3" height="17" fill="#32cd32"/>
<rect x="1420" y="410" width="3" height="16" fill="#004b00"/>
<rect x="1424" y="414" width="3" height="12" fill="#004b00"/>
<rect x="1428" y="416" width="3" height="10" fill="#004b00"/>
<rect x="1432" y="417" width="3" height="9" fill="#004b00"/>
<rect x="1436" y="418" width="3" height="8" fill="#004b00"/>
<rect x="1440" y="421" width="3" height="5" fill="#004b00"/>
<rect x="1444" y="422" width="3" height="4" fill="#004b00"/>
<rect x="1448" y="421" width="3" height="5" fill="#32cd32"/>
<rect x="1452" y="421" width="3" height="5" fill="#004b00"/>
<rect x="1456" y="418" width="3" height="8" fill="#32cd32"/>
<rect x="1460" y="413" width="3" height="13" fill="#32cd32"/>
<rect x="1464" y="408" width="3" height="18" fill="#32cd32"/>
<rect x="1468" y="411" width="3" height="15" fill="#004b00"/>
<rect x="1472" y="415" width="3" height="11" fill="#004b00"/>
<rect x="1476" y="426" width="3" height="3" fill="#640000"/>
<rect x="1480" y="426" width="3" height="13" fill="#640000"/>
<rect x="1484" y="426" width="3" height="20" fill="#640000"/>
<rect x="1488" y="426" width="3" height="22" fill="#640000"/>
<rect x="1492" y="426" width="3" height="25" fill="#640000"/>
<rect x="1496" y="426" width="3" height="24" fill="#ff0000"/>
<rect x="1500" y="426" width="3" height="25" fill="#640000"/>
<rect x="1504" y="426" width="3" height="26" fill="#640000"/>
<rect x="1508" y="426" width="3" height="20" fill="#ff0000"/>
<rect x="1512" y="426" width="3" height="15" fill="#ff0000"/>
<rect x="1516" y="426" width="3" height="10" fill="#ff0000"/>
<polyline points="273.0,399.8 277.0,400.5 281.0,401.2 285.0,402.2 289.0,403.2 293.0,404.1 297.0,404.9 301.0,405.8 305.0,406.5 309.0,407.2 313.0,407.6 317.0,407.8 321.0,408.1 325.0,408.6 329.0,409.5 333.0,410.5 337.0,411.4 341.0,412.3 345.0,413.2 349.0,414.3 353.0,415.4 357.0,416.4 361.0,417.0 365.0,417.3 369.0,417.4 373.0,417.3 377.0,417.0 381.0,416.3 385.0,415.1 389.0,413.3 393.0,411.3 397.0,409.3 401.0,407.4 405.0,405.4 409.0,404.3 413.0,404.0 417.0,404.3 421.0,404.8 425.0,405.8 429.0,406.5 433.0,406.9 437.0,407.0 441.0,407.1 445.0,406.7 449.0,406.0 453.0,405.8 457.0,407.2 461.0,409.2 465.0,412.7 469.0,416.9 473.0,422.4 477.0,428.7 481.0,435.1 485.0,441.5 489.0,446.5 493.0,449.0 497.0,450.2 501.0,449.6 505.0,448.1 509.0,445.4 513.0,441.6 517.0,437.6 521.0,433.4 525.0,429.5 529.0,426.6 533.0,424.2 537.0,421.9 541.0,420.0 545.0,418.3 549.0,416.4 553.0,413.9 557.0,410.9 561.0,407.5 565.0,404.2 569.0,400.9 573.0,398.5 577.0,396.6 581.0,394.9 585.0,393.9 589.0,393.3 593.0,393.0 597.0,393.2 601.0,393.6 605.0,394.4 609.0,395.2 613.0,395.7 617.0,396.5 621.0,397.3 625.0,398.4 629.0,399.8 633.0,401.4 637.0,403.3 641.0,404.9 645.0,406.5 649.0,408.0 653.0,409.3 657.0,410.5 661.0,411.4 665.0,412.0 669.0,412.2 673.0,411.8 677.0,411.4 681.0,410.9 685.0,410.2 689.0,409.5 693.0,408.9 697.0,408.4 701.0,408.4 705.0,408.9 709.0,410.1 713.0,411.2 717.0,412.5 721.0,413.7 725.0,414.6 729.0,415.6 733.0,416.8 737.0,418.0 741.0,419.2 745.0,420.6 749.0,422.0 753.0,423.2 757.0,424.3 761.0,425.3 765.0,426.1 769.0,426.3 773.0,426.4 777.0,426.0 781.0,425.3 785.0,424.4 789.0,423.5 793.0,422.7 797.0,421.8 801.0,420.8 805.0,419.8 809.0,418.6 813.0,417.4 817.0,416.1 821.0,414.6 825.0,413.3 829.0,412.1 833.0,411.2 837.0,410.6 841.0,410.2 845.0,409.8 849.0,409.4 853.0,409.0 857.0,408.5 861.0,408.2 865.0,407.8 869.0,407.4 873.0,406.9 877.0,406.4 881.0,406.1 885.0,405.9 889.0,406.0 893.0,406.1 897.0,406.0 901.0,405.4 905.0,404.4 909.0,402.9 913.0,400.9 917.0,398.0 921.0,394.6 925.0,390.7 929.0,386.7 933.0,382.7 937.0,379.0 941.0,375.7 945.0,372.5 949.0,369.2 953.0,366.3 957.0,364.0 961.0,362.3 965.0,360.8 969.0,361.1 973.0,362.6 977.0,364.7 981.0,368.0 985.0,372.2 989.0,377.1 993.0,381.7 997.0,386.8 1001.0,392.1 1005.0,396.3 1009.0,399.9 1013.0,403.3 1017.0,406.3 1021.0,408.7 1025.0,411.3 1029.0,413.9 1033.0,415.7 1037.0,417.0 1041.0,417.7 1045.0,418.3 1049.0,418.8 1053.0,419.3 1057.0,419.9 1061.0,420.5 1065.0,421.3 1069.0,422.3 1073.0,423.4 1077.0,424.6 1081.0,425.6 1085.0,426.1 1089.0,426.2 1093.0,426.1 1097.0,425.9 1101.0,425.4 1105.0,425.1 1109.0,425.1 1113.0,425.5 1117.0,426.7 1121.0,428.5 1125.0,430.9 1129.0,433.6 1133.0,436.3 1137.0,438.8 1141.0,441.3 1145.0,443.1 1149.0,444.4 1153.0,444.8 1157.0,444.3 1161.0,443.6 1165.0,442.6 1169.0,441.5 1173.0,440.1 1177.0,438.4 1181.0,436.8 1185.0,435.5 1189.0,434.3 1193.0,433.4 1197.0,432.4 1201.0,431.4 1205.0,430.5 1209.0,429.9 1213.0,429.5 1217.0,429.4 1221.0,429.1 1225.0,428.9 1229.0,428.7 1233.0,428.5 1237.0,428.5 1241.0,428.8 1245.0,429.4 1249.0,430.2 1253.0,431.0 1257.0,431.3 1261.0,431.5 1265.0,431.1 1269.0,430.3 1273.0,428.8 1277.0,427.5 1281.0,426.6 1285.0,425.9 1289.0,425.6 1293.0,425.6 1297.0,425.7 1301.0,426.5 1305.0,427.9 1309.0,429.8 1313.0,431.3 1317.0,432.5 1321.0,433.3 1325.0,434.2 1329.0,435.7 1333.0,437.6 1337.0,439.7 1341.0,442.1 1345.0,444.6 1349.0,447.3 1353.0,449.7 1357.0,451.7 1361.0,453.0 1365.0,453.3 1369.0,453.0 1373.0,451.9 1377.0,449.8 1381.0,447.5 1385.0,444.8 1389.0,442.1 1393.0,439.8 1397.0,438.0 1401.0,436.3 1405.0,434.6 1409.0,432.9 1413.0,431.4 1417.0,429.6 1421.0,427.9 1425.0,426.3 1429.0,424.7 1433.0,422.8 1437.0,421.1 1441.0,419.7 1445.0,418.7 1449.0,417.9 1453.0,417.2 1457.0,416.4 1461.0,415.1 1465.0,413.4 1469.0,411.8 1473.0,410.5 1477.0,409.9 1481.0,410.0 1485.0,410.7 1489.0,411.8 1493.0,413.5 1497.0,415.9 1501.0,419.2 1505.0,423.0 1509.0,426.7 1513.0,429.7 1517.0,431.9" fill="none" stroke="#d2691e" stroke-width="1" />
<polyline points="273.0,402.9 277.0,404.9 281.0,405.9 285.0,407.4 289.0,407.5 293.0,406.7 297.0,406.8 301.0,408.1 305.0,408.3 309.0,409.1 313.0,408.4 317.0,408.3 321.0,409.3 325.0,412.5 329.0,414.8 333.0,415.9 337.0,416.3 341.0,416.4 345.0,417.0 349.0,418.0 353.0,418.5 357.0,418.3 361.0,417.7 365.0,417.4 369.0,417.1 373.0,415.3 377.0,413.4 381.0,410.9 385.0,407.0 389.0,402.4 393.0,400.4 397.0,400.3 401.0,399.8 405.0,399.5 409.0,405.4 413.0,410.5 417.0,413.6 421.0,411.4 425.0,410.9 429.0,407.0 433.0,404.3 437.0,400.1 441.0,400.3 445.0,401.9 449.0,404.3 453.0,412.4 457.0,423.2 461.0,429.3 465.0,438.5 469.0,442.4 473.0,449.3 477.0,456.8 481.0,459.7 485.0,462.2 489.0,456.8 493.0,446.0 497.0,440.0 501.0,433.2 505.0,428.8 509.0,424.9 513.0,422.5 517.0,424.2 521.0,423.9 525.0,421.8 529.0,419.8 533.0,418.4 537.0,413.1 541.0,411.1 545.0,409.6 549.0,405.3 553.0,401.9 557.0,396.7 561.0,392.0 565.0,389.8 569.0,388.8 573.0,391.0 577.0,394.0 581.0,394.7 585.0,396.5 589.0,396.0 593.0,394.2 597.0,393.7 601.0,393.9 605.0,395.7 609.0,397.8 613.0,398.5 617.0,402.3 621.0,404.0 625.0,405.5 629.0,406.8 633.0,408.2 637.0,410.8 641.0,410.6 645.0,411.6 649.0,412.3 653.0,414.0 657.0,414.6 661.0,414.0 665.0,412.2 669.0,409.8 673.0,407.0 677.0,407.3 681.0,406.6 685.0,406.1 689.0,408.2 693.0,408.6 697.0,410.1 701.0,411.9 705.0,414.6 709.0,417.0 713.0,417.9 717.0,417.9 721.0,417.0 725.0,416.4 729.0,417.5 733.0,421.1 737.0,422.2 741.0,426.1 745.0,429.3 749.0,430.3 753.0,429.3 757.0,426.7 761.0,425.6 765.0,424.3 769.0,423.1 773.0,423.2 777.0,422.6 781.0,422.2 785.0,422.6 789.0,421.2 793.0,419.6 797.0,417.6 801.0,414.9 805.0,413.9 809.0,412.7 813.0,411.4 817.0,410.6 821.0,409.9 825.0,408.7 829.0,409.5 833.0,409.2 837.0,409.7 841.0,410.0 845.0,409.2 849.0,408.2 853.0,406.3 857.0,405.7 861.0,405.8 865.0,405.8 869.0,405.8 873.0,405.5 877.0,405.1 881.0,406.5 885.0,406.7 889.0,407.2 893.0,406.9 897.0,404.6 901.0,400.5 905.0,396.3 909.0,391.9 913.0,387.8 917.0,380.3 921.0,376.0 925.0,372.1 929.0,370.8 933.0,368.7 937.0,367.0 941.0,367.0 945.0,362.4 949.0,358.9 953.0,354.1 957.0,354.8 961.0,356.6 965.0,357.8 969.0,371.2 973.0,380.9 977.0,385.9 981.0,391.5 985.0,397.4 989.0,397.6 993.0,396.2 997.0,402.4 1001.0,405.3 1005.0,409.4 1009.0,413.0 1013.0,416.4 1017.0,418.9 1021.0,418.8 1025.0,421.3 1029.0,419.9 1033.0,417.9 1037.0,417.1 1041.0,416.0 1045.0,418.1 1049.0,421.3 1053.0,423.3 1057.0,424.5 1061.0,426.3 1065.0,427.6 1069.0,426.8 1073.0,426.8 1077.0,426.9 1081.0,426.9 1085.0,425.4 1089.0,424.8 1093.0,423.6 1097.0,424.0 1101.0,423.5 1105.0,423.8 1109.0,426.9 1113.0,430.6 1117.0,437.8 1121.0,442.0 1125.0,445.7 1129.0,448.3 1133.0,448.1 1137.0,446.4 1141.0,445.9 1145.0,443.6 1149.0,442.3 1153.0,440.6 1157.0,438.1 1161.0,439.3 1165.0,439.3 1169.0,438.1 1173.0,434.0 1177.0,430.7 1181.0,428.9 1185.0,430.2 1189.0,430.4 1193.0,429.9 1197.0,430.4 1201.0,430.2 1205.0,429.8 1209.0,428.8 1213.0,427.1 1217.0,427.4 1221.0,427.8 1225.0,428.6 1229.0,428.4 1233.0,428.0 1237.0,430.3 1241.0,433.0 1245.0,433.8 1249.0,435.0 1253.0,434.0 1257.0,431.1 1261.0,429.8 1265.0,424.9 1269.0,420.6 1273.0,416.8 1277.0,421.9 1281.0,425.1 1285.0,429.1 1289.0,430.8 1293.0,431.3 1297.0,431.3 1301.0,431.8 1305.0,432.7 1309.0,434.1 1313.0,435.8 1317.0,435.8 1321.0,436.0 1325.0,439.5 1329.0,444.5 1333.0,448.2 1337.0,450.5 1341.0,454.5 1345.0,456.9 1349.0,459.4 1353.0,457.8 1357.0,454.4 1361.0,450.4 1365.0,447.5 1369.0,445.6 1373.0,440.6 1377.0,436.0 1381.0,436.2 1385.0,434.6 1389.0,433.8 1393.0,433.8 1397.0,434.3 1401.0,432.2 1405.0,429.4 1409.0,425.3 1413.0,422.8 1417.0,420.3 1421.0,419.3 1425.0,419.6 1429.0,418.9 1433.0,417.8 1437.0,416.5 1441.0,416.9 1445.0,416.5 1449.0,415.0 1453.0,414.6 1457.0,412.1 1461.0,407.6 1465.0,403.6 1469.0,403.4 1473.0,404.5 1477.0,411.5 1481.0,417.4 1485.0,421.7 1489.0,424.1 1493.0,427.3 1497.0,429.3 1501.0,433.3 1505.0,437.7 1509.0,438.1 1513.0,438.0 1517.0,437.4" fill="none" stroke="#1e90ff" stroke-width="1" />
<line x1="273" y1="528.5" x2="1840" y2="528.5" stroke="#c0c0c0" stroke-width="1" stroke-dasharray="3 3"/>
<line x1="273" y1="582.5" x2="1840" y2="582.5" stroke="#c0c0c0" stroke-width="1" stroke-dasharray="3 3"/>
<polyline points="273.0,544.8 277.0,548.7 281.0,546.2 285.0,548.1 289.0,543.5 293.0,539.8 297.0,542.2 301.0,548.0 305.0,543.7 309.0,546.3 313.0,540.4 317.0,541.9 321.0,547.1 325.0,558.0 329.0,556.2 333.0,551.9 337.0,549.9 341.0,548.1 345.0,550.7 349.0,553.0 353.0,551.4 357.0,547.5 361.0,544.4 365.0,545.7 369.0,544.7 373.0,536.3 377.0,533.6 381.0,529.4 385.0,522.5 389.0,518.2 393.0,528.4 397.0,535.7 401.0,533.5 405.0,532.8 409.0,562.0 413.0,562.8 417.0,558.2 421.0,541.8 425.0,546.2 429.0,536.7 433.0,537.6 437.0,532.2 441.0,544.4 445.0,548.5 449.0,551.4 453.0,567.1 457.0,575.4 461.0,568.3 465.0,575.8 469.0,567.6 473.0,573.9 477.0,577.3 481.0,570.5 485.0,571.6 489.0,556.0 493.0,545.8 497.0,551.0 501.0,547.9 505.0,550.0 509.0,549.1 513.0,550.6 517.0,557.9 521.0,554.6 525.0,550.8 529.0,550.1 533.0,550.1 537.0,542.0 541.0,547.1 545.0,546.9 549.0,540.5 553.0,540.2 557.0,535.1 561.0,533.7 565.0,537.3 569.0,538.2 573.0,546.4 577.0,548.8 581.0,544.3 585.0,547.1 589.0,541.7 593.0,538.2 597.0,540.0 601.0,540.8 605.0,545.6 609.0,546.9 613.0,543.5 617.0,553.8 621.0,549.2 625.0,549.2 629.0,548.5 633.0,549.4 637.0,554.7 641.0,546.4 645.0,550.4 649.0,549.3 653.0,553.8 657.0,550.5 661.0,546.0 665.0,541.1 669.0,537.9 673.0,534.6 677.0,545.8 681.0,542.1 685.0,541.4 689.0,551.6 693.0,547.0 697.0,550.9 701.0,552.7 705.0,557.2 709.0,558.1 713.0,553.3 717.0,549.7 721.0,546.3 725.0,546.0 729.0,553.8 733.0,564.5 737.0,556.8 741.0,567.2 745.0,567.7 749.0,561.4 753.0,554.1 757.0,548.0 761.0,552.2 765.0,550.2 769.0,549.7 773.0,554.1 777.0,551.3 781.0,551.3 785.0,554.7 789.0,547.1 793.0,544.9 797.0,541.6 801.0,537.1 805.0,543.2 809.0,540.9 813.0,539.2 817.0,539.2 821.0,538.2 825.0,534.9 829.0,545.3 833.0,540.6 837.0,543.9 841.0,542.6 845.0,537.7 849.0,534.8 853.0,530.1 857.0,535.2 861.0,537.9 865.0,536.3 869.0,535.4 873.0,533.3 877.0,531.2 881.0,543.9 885.0,538.2 889.0,539.3 893.0,535.2 897.0,526.5 901.0,519.7 905.0,516.9 909.0,514.2 913.0,512.3 917.0,506.4 921.0,513.4 925.0,511.9 929.0,518.7 933.0,515.9 937.0,514.9 941.0,519.6 945.0,511.8 949.0,511.3 953.0,508.3 957.0,526.0 961.0,527.9 965.0,526.0 969.0,561.1 973.0,557.6 977.0,551.0 981.0,553.9 985.0,556.6 989.0,546.7 993.0,543.3 997.0,558.3 1001.0,554.0 1005.0,556.9 1009.0,557.5 1013.0,558.2 1017.0,557.7 1021.0,552.6 1025.0,558.5 1029.0,550.8 1033.0,548.9 1037.0,550.7 1041.0,549.4 1045.0,556.6 1049.0,560.2 1053.0,558.6 1057.0,557.6 1061.0,559.8 1065.0,559.5 1069.0,554.0 1073.0,555.9 1077.0,556.2 1081.0,555.8 1085.0,550.9 1089.0,552.6 1093.0,550.1 1097.0,555.9 1101.0,552.3 1105.0,555.1 1109.0,565.6 1113.0,569.5 1117.0,580.5 1121.0,574.4 1125.0,576.1 1129.0,575.3 1133.0,566.6 1137.0,561.8 1141.0,564.9 1145.0,558.7 1149.0,560.7 1153.0,558.7 1157.0,555.1 1161.0,566.3 1165.0,562.8 1169.0,558.8 1173.0,548.7 1177.0,548.3 1181.0,551.7 1185.0,561.6 1189.0,558.9 1193.0,556.3 1197.0,559.7 1201.0,557.8 1205.0,556.8 1209.0,553.8 1213.0,550.4 1217.0,557.7 1221.0,558.2 1225.0,560.8 1229.0,556.7 1233.0,555.5 1237.0,567.3 1241.0,570.6 1245.0,563.9 1249.0,566.5 1253.0,557.4 1257.0,549.1 1261.0,553.8 1265.0,540.4 1269.0,539.4 1273.0,537.8 1277.0,565.7 1281.0,563.2 1285.0,566.6 1289.0,562.0 1293.0,559.5 1297.0,558.5 1301.0,560.0 1305.0,562.3 1309.0,564.4 1313.0,566.9 1317.0,561.5 1321.0,562.5 1325.0,573.6 1329.0,579.4 1333.0,579.4 1337.0,577.7 1341.0,583.4 1345.0,581.7 1349.0,583.7 1353.0,568.4 1357.0,561.1 1361.0,557.2 1365.0,559.3 1369.0,561.2 1373.0,549.2 1377.0,547.8 1381.0,561.1 1385.0,556.0 1389.0,557.5 1393.0,560.0 1397.0,561.9 1401.0,553.1 1405.0,549.6 1409.0,543.7 1413.0,546.7 1417.0,544.9 1421.0,548.7 1425.0,553.1 1429.0,549.3 1433.0,547.1 1437.0,545.0 1441.0,551.3 1445.0,548.4 1449.0,543.5 1453.0,546.5 1457.0,538.8 1461.0,531.5 1465.0,529.9 1469.0,542.7 1473.0,547.0 1477.0,565.9 1481.0,566.7 1485.0,565.0 1489.0,561.1 1493.0,565.1 1497.0,563.4 1501.0,570.4 1505.0,573.7 1509.0,562.5 1513.0,561.6 1517.0,559.9" fill="none" stroke="#1e90ff" stroke-width="1" />
<g fill="none" stroke="#fff" stroke-width="1">
<rect x="272.500" y="66.500" width="1568" height="278"/>
<rect x="272.500" y="346.500" width="1568" height="138"/>
<rect x="272.500" y="486.500" width="1568" height="137"/>
</g>
<g stroke="#fff" stroke-width="1">
<path d="M1840 114.500h4M1840 244.500h4M1840 309.500h4M1840 348.500h2M1840 426.500h2M1840 483.500h2M1840 528.500h2M1840 582.500h2"/>
<path d="M273.5 623v4M401.5 623v4M529.5 623v4M657.5 623v4M785.5 623v4M913.5 623v4M1041.5 623v4M1169.5 623v4M1297.5 623v4M1425.5 623v4"/>
</g>
<path d="M276 74h12l-6 6.500z" fill="#fff" shape-rendering="auto"/>
<path d="M1518 67h14l-7 7z" fill="#8a96a8" shape-rendering="auto"/>
<rect x="1842" y="166" width="55" height="17" fill="#fff"/>
</svg>
<div class="a ct" style="left:294px;top:70px"><span style="letter-spacing:-.42px">XAUUSD,Daily</span><span style="letter-spacing:.36px">&nbsp; 1840.97 1850.40 1839.51 1848.20</span></div>
<div class="a ct" style="left:282px;top:80px"><span class="hs">#</span>11093385 sl</div>
<div class="a ct" style="left:282px;top:110.7px"><span class="hs">#</span>11093385 sell 0.30</div>
<div class="a ct" style="left:282px;top:112.7px"><span class="hs">#</span>11093869 sell 0.20</div>
<div class="a ct" style="left:282px;top:114.7px"><span class="hs">#</span>11098005 sell 0.20</div>
<div class="a ct" style="left:282px;top:125.7px"><span class="hs">#</span>11691539 sell 0.20</div>
<div class="a ct" style="left:282px;top:143.7px"><span class="hs">#</span>11545044 sell 0.20</div>
<div class="a ct" style="left:282px;top:145.7px"><span class="hs">#</span>11483033 sell 0.20</div>
<div class="a ct" style="left:282px;top:147.7px"><span class="hs">#</span>11469055 sell 0.20</div>
<div class="a ct" style="left:282px;top:162.7px"><span class="hs">#</span>11873113 <span style="letter-spacing:1.6px">buy </span>0.20</div>
<div class="a ct" style="left:282px;top:164.7px"><span class="hs">#</span>11861083 <span style="letter-spacing:1.6px">buy </span>0.20</div>
<div class="a ct" style="left:282px;top:165.7px"><span class="hs">#</span>11859109 <span style="letter-spacing:1.6px">buy </span>0.20</div>
<div class="a ct" style="left:282px;top:167.7px"><span class="hs">#</span>11102608 <span style="letter-spacing:1.6px">buy </span>0.20</div>
<div class="a ct" style="left:277px;top:352px"><span style="letter-spacing:-.47px">MACD_OsMA </span>[CurrTF] <span style="letter-spacing:.4px">(12,26,9) -10.2566 -5.1343</span></div>
<div class="a ct" style="left:277px;top:492px">RSI(14) 46.3201</div>
<!-- price scale -->
<div class="a ct" style="left:1846px;top:107px">1992.50</div>
<div class="a ct" style="left:1846px;top:174px;">1836.50</div>
<div class="a" style="left:1842px;top:166px;width:55px;height:17px;background:#fff"></div>
<div class="a ct" style="left:1846px;top:167.500px;color:#000">1848.20</div>
<div class="a ct" style="left:1846px;top:237px">1678.10</div>
<div class="a ct" style="left:1846px;top:302px">1519.70</div>
<div class="a ct" style="left:1844px;top:349px">68.7941</div>
<div class="a ct" style="left:1844px;top:419px">0.00</div>
<div class="a ct" style="left:1844px;top:468px">-50.1699</div>
<div class="a ct" style="left:1844px;top:490px">100</div>
<div class="a ct" style="left:1844px;top:522px">70</div>
<div class="a ct" style="left:1844px;top:575px">30</div>
<div class="a ct" style="left:1844px;top:607px">0</div>
<!-- time axis -->
<div class="a ct" style="left:272px;top:629px">20 Jan 2020</div>
<div class="a ct" style="left:400px;top:629px">26 Feb 2020</div>
<div class="a ct" style="left:528px;top:629px">3 Apr 2020</div>
<div class="a ct" style="left:656px;top:629px">12 May 2020</div>
<div class="a ct" style="left:784px;top:629px">18 Jun 2020</div>
<div class="a ct" style="left:912px;top:629px">26 Jul 2020</div>
<div class="a ct" style="left:1040px;top:629px">1 Sep 2020</div>
<div class="a ct" style="left:1168px;top:629px">8 Oct 2020</div>
<div class="a ct" style="left:1296px;top:629px">15 Nov 2020</div>
<div class="a ct" style="left:1424px;top:629px">22 Dec 2020</div>
<!-- ===== chart tabs ===== -->
<div class="a" style="left:270px;top:652px;width:1627px;height:1px;background:#000"></div><div class="a" style="left:270px;top:653px;width:1449px;height:1px;background:#fff"></div>
<div class="a ctab" style="left:291px">GBPAUD,Daily</div><div class="a csep" style="left:431px"></div>
<div class="a ctab" style="left:447px">EURJPY,Weekly</div><div class="a csep" style="left:595px"></div>
<div class="a ctab" style="left:610px">USDCHF,Daily</div><div class="a csep" style="left:747px"></div>
<div class="a ctab" style="left:764px">NZDJPY,H4</div><div class="a csep" style="left:878px"></div>
<div class="a ctab" style="left:895px">AUDNZD,Daily</div><div class="a csep" style="left:1039px"></div>
<div class="a ctab" style="left:1055px">EURAUD,H4</div><div class="a csep" style="left:1175px"></div>
<div class="a ctab" style="left:1191px">#HKG50,H4</div><div class="a csep" style="left:1307px"></div>
<div class="a ctab" style="left:1324px">#JPN225,H1</div><div class="a csep" style="left:1447px"></div>
<div class="a ctab" style="left:1464px">AUDUSD,H1</div><div class="a csep" style="left:1587px"></div>
<div class="a ctab" style="left:1602px">GBPUSD,H1</div>
<div class="a" style="left:1719px;top:652px;width:140px;height:30px;background:#fff;border-left:1px solid #000;border-bottom:1px solid #000"></div>
<div class="a ctab" style="left:1735px;color:#000">XAUUSD,Daily</div>
<div class="a" style="left:1858px;top:653px;width:39px;height:29px;background:#f0f0f0"></div>
<svg class="a" style="left:1864px;top:659px" width="33" height="14" viewBox="0 0 33 14"><path d="M9 1v11l-6-5.500zM30 1v11l6-5.500z" fill="#000"/></svg>
<!-- ===== Terminal ===== -->
<div class="a" style="left:0;top:683px;width:1897px;height:8px;background:#f0f0f0"></div>
<div class="a" style="left:0;top:712px;width:18px;height:135px;background:#c8d6e5"></div>
<svg class="a" style="left:1px;top:693px" width="12" height="10" viewBox="0 0 12 10"><path d="M1.500 1l8 7.500M9.500 1l-8 7.500" stroke="#000" stroke-width="2.200"/></svg>
<div class="a" id="term"></div>
<div class="a trow" style="top:691px;height:31px;background:#fff;border-bottom:1px solid #c8c8c8"><div class="a th" style="left:6px">订单</div><div class="a" style="left:54px;top:10px;font-size:9px;color:#666;line-height:10px;font-style:italic">/</div><div class="a th" style="right:1429px">时间</div><div class="a th" style="right:1303px">类型</div><div class="a th" style="right:1203px">手数</div><div class="a th" style="right:1077px">交易品种</div><div class="a th" style="right:935px">价格</div><div class="a th" style="right:793px">止损</div><div class="a th" style="right:651px">止盈</div><div class="a th" style="right:509px">价格</div><div class="a th" style="right:367px">手续费</div><div class="a th" style="right:224px">库存费</div><div class="a th" style="right:6px">获利</div></div>
<div class="a trow" style="top:722px;background:#ebebeb;border-bottom:1px solid #cdcdcd"><svg class="a" style="left:3px;top:4px" width="24" height="24" viewBox="0 0 24 24"><path d="M2 2h10l5 5v14h-15z" fill="#fff" stroke="#777" stroke-width="1.400"/><path d="M12 2v5h5" fill="none" stroke="#777" stroke-width="1.200"/><circle cx="16.500" cy="18.300" r="5.200" fill="#1e98ea" stroke="#0c62b0" stroke-width="1"/></svg><div class="a tc" style="left:31px">11859109</div><div class="a tc" style="right:1429px">2021.01.18 09:49:48</div><div class="a tc" style="right:1303px">buy</div><div class="a tc" style="right:1203px">0.20</div><div class="a tc" style="right:1077px">xauusd</div><div class="a tc" style="right:935px">1830.79</div><div class="a tc" style="right:793px">0.00</div><div class="a tc" style="right:651px">0.00</div><div class="a tc" style="right:509px">1848.02</div><div class="a tc" style="right:367px">0.00</div><div class="a tc" style="right:224px">-1.54</div><div class="a tc" style="right:36px">344.60</div><svg class="a" style="left:1838px;top:6px" width="20" height="20" viewBox="0 0 20 20"><path d="M2 2l16 16M18 2l-16 16" stroke="#555" stroke-width="1.500"/></svg></div>
<div class="a trow" style="top:752px;background:#fff;border-bottom:1px solid #cdcdcd"><svg class="a" style="left:3px;top:4px" width="24" height="24" viewBox="0 0 24 24"><path d="M2 2h10l5 5v14h-15z" fill="#fff" stroke="#777" stroke-width="1.400"/><path d="M12 2v5h5" fill="none" stroke="#777" stroke-width="1.200"/><circle cx="16.500" cy="18.300" r="5.200" fill="#1e98ea" stroke="#0c62b0" stroke-width="1"/></svg><div class="a tc" style="left:31px">11861083</div><div class="a tc" style="right:1429px">2021.01.18 13:09:51</div><div class="a tc" style="right:1303px">buy</div><div class="a tc" style="right:1203px">0.20</div><div class="a tc" style="right:1077px">xauusd</div><div class="a tc" style="right:935px">1833.55</div><div class="a tc" style="right:793px">0.00</div><div class="a tc" style="right:651px">0.00</div><div class="a tc" style="right:509px">1848.02</div><div class="a tc" style="right:367px">0.00</div><div class="a tc" style="right:224px">-1.54</div><div class="a tc" style="right:36px">289.40</div><svg class="a" style="left:1838px;top:6px" width="20" height="20" viewBox="0 0 20 20"><path d="M2 2l16 16M18 2l-16 16" stroke="#555" stroke-width="1.500"/></svg></div>
<div class="a trow" style="top:782px;background:#ebebeb;border-bottom:1px solid #cdcdcd"><svg class="a" style="left:3px;top:4px" width="24" height="24" viewBox="0 0 24 24"><path d="M2 2h10l5 5v14h-15z" fill="#fff" stroke="#777" stroke-width="1.400"/><path d="M12 2v5h5" fill="none" stroke="#777" stroke-width="1.200"/><circle cx="16.500" cy="18.300" r="5.200" fill="#1e98ea" stroke="#0c62b0" stroke-width="1"/></svg><div class="a tc" style="left:31px">11873113</div><div class="a tc" style="right:1429px">2021.01.19 15:04:31</div><div class="a tc" style="right:1303px">buy</div><div class="a tc" style="right:1203px">0.20</div><div class="a tc" style="right:1077px">xauusd</div><div class="a tc" style="right:935px">1836.63</div><div class="a tc" style="right:793px">0.00</div><div class="a tc" style="right:651px">0.00</div><div class="a tc" style="right:509px">1848.02</div><div class="a tc" style="right:367px">0.00</div><div class="a tc" style="right:224px">-0.77</div><div class="a tc" style="right:36px">227.80</div><svg class="a" style="left:1838px;top:6px" width="20" height="20" viewBox="0 0 20 20"><path d="M2 2l16 16M18 2l-16 16" stroke="#555" stroke-width="1.500"/></svg></div>
<div class="a trow" style="top:812px;background:#c8c8c8;height:29px"><svg class="a" style="left:3px;top:3px" width="22" height="24" viewBox="0 0 22 24"><rect x="2" y="2" width="17" height="20.500" rx="2" fill="#fff" stroke="#777" stroke-width="1.400"/><path d="M10.500 7l5.500 6h-3v5.500h-5v-5.500h-3z" fill="#22b822" stroke="#0d7a0d"/></svg><div class="a tc" style="left:31px;font-weight:bold;font-size:18.5px">余额: 43 005.12 USD&nbsp; 净值: 69 395.04&nbsp; 已用预付款: 589.56&nbsp; 可用预付款: 68 805.48&nbsp; 预付款比例: 11770.71%</div><div class="a tc" style="right:36px;font-weight:bold;font-size:18.5px">26 389.92</div></div>
<div class="a" style="left:202px;top:691px;width:1px;height:30px;background:#e5e5e5"></div><div class="a" style="left:201px;top:722px;width:1px;height:90px;background:#cdcdcd"></div><div class="a" style="left:457px;top:691px;width:1px;height:30px;background:#e5e5e5"></div><div class="a" style="left:456px;top:722px;width:1px;height:90px;background:#cdcdcd"></div><div class="a" style="left:583px;top:691px;width:1px;height:30px;background:#e5e5e5"></div><div class="a" style="left:582px;top:722px;width:1px;height:90px;background:#cdcdcd"></div><div class="a" style="left:683px;top:691px;width:1px;height:30px;background:#e5e5e5"></div><div class="a" style="left:682px;top:722px;width:1px;height:90px;background:#cdcdcd"></div><div class="a" style="left:810px;top:691px;width:1px;height:30px;background:#e5e5e5"></div><div class="a" style="left:809px;top:722px;width:1px;height:90px;background:#cdcdcd"></div><div class="a" style="left:951px;top:691px;width:1px;height:30px;background:#e5e5e5"></div><div class="a" style="left:950px;top:722px;width:1px;height:90px;background:#cdcdcd"></div><div class="a" style="left:1094px;top:691px;width:1px;height:30px;background:#e5e5e5"></div><div class="a" style="left:1093px;top:722px;width:1px;height:90px;background:#cdcdcd"></div><div class="a" style="left:1236px;top:691px;width:1px;height:30px;background:#e5e5e5"></div><div class="a" style="left:1235px;top:722px;width:1px;height:90px;background:#cdcdcd"></div><div class="a" style="left:1378px;top:691px;width:1px;height:30px;background:#e5e5e5"></div><div class="a" style="left:1377px;top:722px;width:1px;height:90px;background:#cdcdcd"></div><div class="a" style="left:1520px;top:691px;width:1px;height:30px;background:#e5e5e5"></div><div class="a" style="left:1519px;top:722px;width:1px;height:90px;background:#cdcdcd"></div><div class="a" style="left:1662px;top:691px;width:1px;height:30px;background:#e5e5e5"></div><div class="a" style="left:1661px;top:722px;width:1px;height:90px;background:#cdcdcd"></div>
<div class="a" style="left:1881px;top:691px;width:16px;height:156px;background:#f0f0f0"></div>
<svg class="a" style="left:1883px;top:701px" width="14" height="10" viewBox="0 0 14 10"><path d="M1 8l6-6 6 6" fill="none" stroke="#555" stroke-width="2"/></svg>
<div class="a" style="left:1883px;top:803px;width:14px;height:30px;background:#cdcdcd"></div><svg class="a" style="left:1884px;top:841px" width="14" height="10" viewBox="0 0 14 10"><path d="M1 2l6 6 6-6" fill="none" stroke="#555" stroke-width="2"/></svg>
<div class="a" style="left:1524px;top:770px;font-size:32px;line-height:42px;color:rgba(110,110,110,.42);white-space:nowrap">激活 Windows</div>
<div class="a" style="left:1524px;top:811.500px;font-size:22.300px;line-height:30px;color:rgba(110,110,110,.42);white-space:nowrap">转到“设置”以激活 Windows。</div>

</body></html>
